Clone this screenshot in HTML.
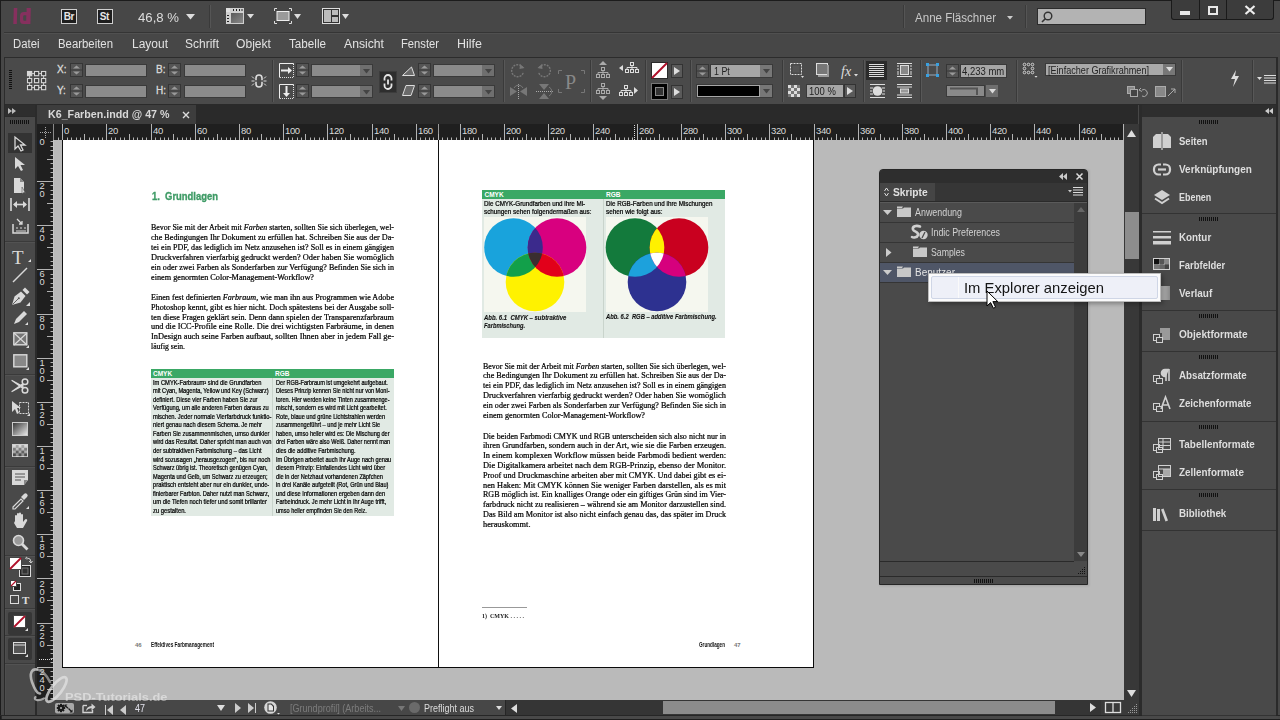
<!DOCTYPE html>
<html><head><meta charset="utf-8">
<style>
*{margin:0;padding:0;box-sizing:border-box}
html,body{width:1280px;height:720px;overflow:hidden;background:#474747;font-family:"Liberation Sans",sans-serif;position:relative}
.a{position:absolute}
.t{position:absolute;white-space:nowrap}
svg.a{overflow:visible}
</style></head><body>
<div class="a" style="left:0px;top:0px;width:1280px;height:1px;background:#1c1c1c;"></div>
<div class="a" style="left:0px;top:0px;width:1px;height:720px;background:#1c1c1c;"></div>
<div class="a" style="left:4px;top:32px;width:1276px;height:1px;background:#353535;"></div>
<div class="a" style="left:4px;top:33px;width:1276px;height:1px;background:#505050;"></div>
<div class="a" style="left:4px;top:57px;width:1276px;height:1px;background:#2c2c2c;"></div>
<div class="a" style="left:4px;top:58px;width:1px;height:46px;background:#2c2c2c;"></div>
<div class="a" style="left:5px;top:58px;width:1275px;height:46px;background:#4a4a4a;"></div>
<div class="a" style="left:0px;top:104px;width:1280px;height:1px;background:#2a2a2a;"></div>
<div class="a" style="left:37px;top:105px;width:1101px;height:19px;background:#2a2a2a;"></div>
<div class="a" style="left:37px;top:105px;width:159px;height:19px;background:#3d3d3d;"></div>
<div class="a" style="left:0px;top:104px;width:37px;height:616px;background:#2b2b2b;"></div>
<div class="a" style="left:0px;top:104px;width:1px;height:616px;background:#1c1c1c;"></div>
<div class="a" style="left:1px;top:104px;width:3px;height:611px;background:#474747;"></div>
<div class="a" style="left:4px;top:104px;width:1px;height:611px;background:#2a2a2a;"></div>
<div class="a" style="left:5px;top:105px;width:30px;height:11px;background:#2e2e2e;"></div>
<div class="a" style="left:5px;top:117px;width:30px;height:598px;background:#494949;"></div>
<div class="a" style="left:5px;top:117px;width:1px;height:598px;background:#4e4e4e;"></div>
<div class="a" style="left:37px;top:124px;width:1087px;height:16px;background:#1f1f1f;"></div>
<div class="a" style="left:37px;top:140px;width:16px;height:560px;background:#1f1f1f;"></div>
<div class="a" style="left:53px;top:124px;width:1px;height:16px;background:#8a8a8a;"></div>
<div class="a" style="left:438px;top:124px;width:1px;height:16px;background:#9a9a9a;"></div>
<div class="a" style="left:53px;top:140px;width:1071px;height:560px;background:#bababa;"></div>
<div class="a" style="left:53px;top:140px;width:1px;height:560px;background:#c6c6c6;"></div>
<div class="a" style="left:1124px;top:124px;width:15px;height:576px;background:#383838;"></div>
<div class="a" style="left:1125px;top:212px;width:14px;height:47px;background:#8d8d8d;"></div>
<div class="a" style="left:1139px;top:104px;width:141px;height:616px;background:#2b2b2b;"></div>
<div class="a" style="left:1142px;top:105px;width:134px;height:12px;background:#2e2e2e;"></div>
<div class="a" style="left:1276px;top:57px;width:2px;height:658px;background:#2a2a2a;"></div>
<div class="a" style="left:1278px;top:57px;width:2px;height:663px;background:#474747;"></div>
<div class="a" style="left:37px;top:700px;width:1102px;height:15px;background:#474747;"></div>
<div class="a" style="left:0px;top:715px;width:1280px;height:1px;background:#262626;"></div>
<div class="a" style="left:2px;top:716px;width:1276px;height:3px;background:#494949;"></div>
<div class="a" style="left:0px;top:719px;width:1280px;height:1px;background:#1e1e1e;"></div>
<div class="a" style="left:62px;top:140px;width:752px;height:528px;background:#ffffff;"></div>
<div class="a" style="left:62px;top:140px;width:1px;height:528px;background:#111;"></div>
<div class="a" style="left:813px;top:140px;width:1px;height:528px;background:#0a0a0a;"></div>
<div class="a" style="left:62px;top:667px;width:752px;height:1px;background:#0a0a0a;"></div>
<div class="a" style="left:438px;top:140px;width:1px;height:527px;background:#111;"></div>
<div class="t" id="f0" style="left:151.5px;top:190.83px;font-size:10.6px;line-height:10.6px;color:#3f9b66;font-weight:bold;font-family:'Liberation Sans',sans-serif;transform:scaleX(0.8898);transform-origin:0 0;-webkit-text-stroke:0.35px #3f9b66">1.&nbsp;&nbsp;Grundlagen</div>
<div class="t" id="f1" style="left:151px;top:224.33px;font-size:8.2px;line-height:8.2px;color:#000;font-weight:normal;font-family:'Liberation Serif',serif;transform:scaleX(0.9715);transform-origin:0 0;-webkit-text-stroke:0.22px #000">Bevor Sie mit der Arbeit mit <i>Farben</i> starten, sollten Sie sich überlegen, wel-</div>
<div class="t" id="f2" style="left:151px;top:234.28px;font-size:8.2px;line-height:8.2px;color:#000;font-weight:normal;font-family:'Liberation Serif',serif;transform:scaleX(0.9970);transform-origin:0 0;-webkit-text-stroke:0.22px #000">che Bedingungen Ihr Dokument zu erfüllen hat. Schreiben Sie aus der Da-</div>
<div class="t" id="f3" style="left:151px;top:244.23px;font-size:8.2px;line-height:8.2px;color:#000;font-weight:normal;font-family:'Liberation Serif',serif;transform:scaleX(0.9848);transform-origin:0 0;-webkit-text-stroke:0.22px #000">tei ein PDF, das lediglich im Netz anzusehen ist? Soll es in einem gängigen</div>
<div class="t" id="f4" style="left:151px;top:254.18px;font-size:8.2px;line-height:8.2px;color:#000;font-weight:normal;font-family:'Liberation Serif',serif;transform:scaleX(1.0209);transform-origin:0 0;-webkit-text-stroke:0.22px #000">Druckverfahren vierfarbig gedruckt werden? Oder haben Sie womöglich</div>
<div class="t" id="f5" style="left:151px;top:264.13px;font-size:8.2px;line-height:8.2px;color:#000;font-weight:normal;font-family:'Liberation Serif',serif;transform:scaleX(0.9838);transform-origin:0 0;-webkit-text-stroke:0.22px #000">ein oder zwei Farben als Sonderfarben zur Verfügung? Befinden Sie sich in</div>
<div class="t" id="f6" style="left:151px;top:274.08px;font-size:8.2px;line-height:8.2px;color:#000;font-weight:normal;font-family:'Liberation Serif',serif;transform:scaleX(1.0036);transform-origin:0 0;-webkit-text-stroke:0.22px #000">einem genormten Color-Management-Workflow?</div>
<div class="t" id="f7" style="left:151px;top:293.63px;font-size:8.2px;line-height:8.2px;color:#000;font-weight:normal;font-family:'Liberation Serif',serif;transform:scaleX(0.9903);transform-origin:0 0;-webkit-text-stroke:0.22px #000">Einen fest definierten <i>Farbraum</i>, wie man ihn aus Programmen wie Adobe</div>
<div class="t" id="f8" style="left:151px;top:303.58px;font-size:8.2px;line-height:8.2px;color:#000;font-weight:normal;font-family:'Liberation Serif',serif;transform:scaleX(1.0034);transform-origin:0 0;-webkit-text-stroke:0.22px #000">Photoshop kennt, gibt es hier nicht. Doch spätestens bei der Ausgabe soll-</div>
<div class="t" id="f9" style="left:151px;top:313.53px;font-size:8.2px;line-height:8.2px;color:#000;font-weight:normal;font-family:'Liberation Serif',serif;transform:scaleX(0.9988);transform-origin:0 0;-webkit-text-stroke:0.22px #000">ten diese Fragen geklärt sein. Denn dann spielen der Transparenzfarbraum</div>
<div class="t" id="f10" style="left:151px;top:323.48px;font-size:8.2px;line-height:8.2px;color:#000;font-weight:normal;font-family:'Liberation Serif',serif;transform:scaleX(1.0101);transform-origin:0 0;-webkit-text-stroke:0.22px #000">und die ICC-Profile eine Rolle. Die drei wichtigsten Farbräume, in denen</div>
<div class="t" id="f11" style="left:151px;top:333.43px;font-size:8.2px;line-height:8.2px;color:#000;font-weight:normal;font-family:'Liberation Serif',serif;transform:scaleX(1.0198);transform-origin:0 0;-webkit-text-stroke:0.22px #000">InDesign auch seine Farben aufbaut, sollten Ihnen aber in jedem Fall ge-</div>
<div class="t" id="f12" style="left:151px;top:343.38px;font-size:8.2px;line-height:8.2px;color:#000;font-weight:normal;font-family:'Liberation Serif',serif;transform:scaleX(0.9343);transform-origin:0 0;-webkit-text-stroke:0.22px #000">läufig sein.</div>
<div class="a" style="left:151px;top:369px;width:243px;height:9px;background:#3aa865;"></div>
<div class="a" style="left:151px;top:378px;width:243px;height:138px;background:#e1eae4;"></div>
<div class="a" style="left:272px;top:378px;width:1px;height:138px;background:#c9d4cc;"></div>
<div class="t" style="left:153px;top:371.00px;font-size:6.5px;line-height:6.5px;color:#fff;font-weight:bold;font-family:'Liberation Sans',sans-serif;letter-spacing:0px">CMYK</div>
<div class="t" style="left:275px;top:371.00px;font-size:6.5px;line-height:6.5px;color:#fff;font-weight:bold;font-family:'Liberation Sans',sans-serif;">RGB</div>
<div class="t" id="f13" style="left:152.5px;top:379.57px;font-size:6.3px;line-height:6.3px;color:#000;font-weight:normal;font-family:'Liberation Sans',sans-serif;transform:scaleX(0.9119);transform-origin:0 0;-webkit-text-stroke:0.22px #000">Im CMYK-Farbraum¹ sind die Grundfarben</div>
<div class="t" id="f14" style="left:152.5px;top:388.12px;font-size:6.3px;line-height:6.3px;color:#000;font-weight:normal;font-family:'Liberation Sans',sans-serif;transform:scaleX(0.8958);transform-origin:0 0;-webkit-text-stroke:0.22px #000">mit Cyan, Magenta, Yellow und Key (Schwarz)</div>
<div class="t" id="f15" style="left:152.5px;top:396.67px;font-size:6.3px;line-height:6.3px;color:#000;font-weight:normal;font-family:'Liberation Sans',sans-serif;transform:scaleX(0.8992);transform-origin:0 0;-webkit-text-stroke:0.22px #000">definiert. Diese vier Farben haben Sie zur</div>
<div class="t" id="f16" style="left:152.5px;top:405.22px;font-size:6.3px;line-height:6.3px;color:#000;font-weight:normal;font-family:'Liberation Sans',sans-serif;transform:scaleX(0.9005);transform-origin:0 0;-webkit-text-stroke:0.22px #000">Verfügung, um alle anderen Farben daraus zu</div>
<div class="t" id="f17" style="left:152.5px;top:413.77px;font-size:6.3px;line-height:6.3px;color:#000;font-weight:normal;font-family:'Liberation Sans',sans-serif;transform:scaleX(0.9208);transform-origin:0 0;-webkit-text-stroke:0.22px #000">mischen. Jeder normale Vierfarbdruck funktio-</div>
<div class="t" id="f18" style="left:152.5px;top:422.32px;font-size:6.3px;line-height:6.3px;color:#000;font-weight:normal;font-family:'Liberation Sans',sans-serif;transform:scaleX(0.9079);transform-origin:0 0;-webkit-text-stroke:0.22px #000">niert genau nach diesem Schema. Je mehr</div>
<div class="t" id="f19" style="left:152.5px;top:430.87px;font-size:6.3px;line-height:6.3px;color:#000;font-weight:normal;font-family:'Liberation Sans',sans-serif;transform:scaleX(0.9079);transform-origin:0 0;-webkit-text-stroke:0.22px #000">Farben Sie zusammenmischen, umso dunkler</div>
<div class="t" id="f20" style="left:152.5px;top:439.42px;font-size:6.3px;line-height:6.3px;color:#000;font-weight:normal;font-family:'Liberation Sans',sans-serif;transform:scaleX(0.9077);transform-origin:0 0;-webkit-text-stroke:0.22px #000">wird das Resultat. Daher spricht man auch von</div>
<div class="t" id="f21" style="left:152.5px;top:447.97px;font-size:6.3px;line-height:6.3px;color:#000;font-weight:normal;font-family:'Liberation Sans',sans-serif;transform:scaleX(0.9144);transform-origin:0 0;-webkit-text-stroke:0.22px #000">der subtraktiven Farbmischung – das Licht</div>
<div class="t" id="f22" style="left:152.5px;top:456.52px;font-size:6.3px;line-height:6.3px;color:#000;font-weight:normal;font-family:'Liberation Sans',sans-serif;transform:scaleX(0.8967);transform-origin:0 0;-webkit-text-stroke:0.22px #000">wird sozusagen „herausgezogen“, bis nur noch</div>
<div class="t" id="f23" style="left:152.5px;top:465.07px;font-size:6.3px;line-height:6.3px;color:#000;font-weight:normal;font-family:'Liberation Sans',sans-serif;transform:scaleX(0.8896);transform-origin:0 0;-webkit-text-stroke:0.22px #000">Schwarz übrig ist. Theoretisch genügen Cyan,</div>
<div class="t" id="f24" style="left:152.5px;top:473.62px;font-size:6.3px;line-height:6.3px;color:#000;font-weight:normal;font-family:'Liberation Sans',sans-serif;transform:scaleX(0.8938);transform-origin:0 0;-webkit-text-stroke:0.22px #000">Magenta und Gelb, um Schwarz zu erzeugen;</div>
<div class="t" id="f25" style="left:152.5px;top:482.17px;font-size:6.3px;line-height:6.3px;color:#000;font-weight:normal;font-family:'Liberation Sans',sans-serif;transform:scaleX(0.9203);transform-origin:0 0;-webkit-text-stroke:0.22px #000">praktisch entsteht aber nur ein dunkler, unde-</div>
<div class="t" id="f26" style="left:152.5px;top:490.72px;font-size:6.3px;line-height:6.3px;color:#000;font-weight:normal;font-family:'Liberation Sans',sans-serif;transform:scaleX(0.8981);transform-origin:0 0;-webkit-text-stroke:0.22px #000">finierbarer Farbton. Daher nutzt man Schwarz,</div>
<div class="t" id="f27" style="left:152.5px;top:499.27px;font-size:6.3px;line-height:6.3px;color:#000;font-weight:normal;font-family:'Liberation Sans',sans-serif;transform:scaleX(0.9201);transform-origin:0 0;-webkit-text-stroke:0.22px #000">um die Tiefen noch tiefer und somit brillanter</div>
<div class="t" id="f28" style="left:152.5px;top:507.82px;font-size:6.3px;line-height:6.3px;color:#000;font-weight:normal;font-family:'Liberation Sans',sans-serif;transform:scaleX(0.9239);transform-origin:0 0;-webkit-text-stroke:0.22px #000">zu gestalten.</div>
<div class="t" id="f29" style="left:275.5px;top:379.57px;font-size:6.3px;line-height:6.3px;color:#000;font-weight:normal;font-family:'Liberation Sans',sans-serif;transform:scaleX(0.8881);transform-origin:0 0;-webkit-text-stroke:0.22px #000">Der RGB-Farbraum ist umgekehrt aufgebaut.</div>
<div class="t" id="f30" style="left:275.5px;top:388.12px;font-size:6.3px;line-height:6.3px;color:#000;font-weight:normal;font-family:'Liberation Sans',sans-serif;transform:scaleX(0.8811);transform-origin:0 0;-webkit-text-stroke:0.22px #000">Dieses Prinzip kennen Sie nicht nur von Moni-</div>
<div class="t" id="f31" style="left:275.5px;top:396.67px;font-size:6.3px;line-height:6.3px;color:#000;font-weight:normal;font-family:'Liberation Sans',sans-serif;transform:scaleX(0.8788);transform-origin:0 0;-webkit-text-stroke:0.22px #000">toren. Hier werden keine Tinten zusammenge-</div>
<div class="t" id="f32" style="left:275.5px;top:405.22px;font-size:6.3px;line-height:6.3px;color:#000;font-weight:normal;font-family:'Liberation Sans',sans-serif;transform:scaleX(0.9020);transform-origin:0 0;-webkit-text-stroke:0.22px #000">mischt, sondern es wird mit Licht gearbeitet.</div>
<div class="t" id="f33" style="left:275.5px;top:413.77px;font-size:6.3px;line-height:6.3px;color:#000;font-weight:normal;font-family:'Liberation Sans',sans-serif;transform:scaleX(0.8930);transform-origin:0 0;-webkit-text-stroke:0.22px #000">Rote, blaue und grüne Lichtstrahlen werden</div>
<div class="t" id="f34" style="left:275.5px;top:422.32px;font-size:6.3px;line-height:6.3px;color:#000;font-weight:normal;font-family:'Liberation Sans',sans-serif;transform:scaleX(0.8931);transform-origin:0 0;-webkit-text-stroke:0.22px #000">zusammengeführt – und je mehr Licht Sie</div>
<div class="t" id="f35" style="left:275.5px;top:430.87px;font-size:6.3px;line-height:6.3px;color:#000;font-weight:normal;font-family:'Liberation Sans',sans-serif;transform:scaleX(0.8885);transform-origin:0 0;-webkit-text-stroke:0.22px #000">haben, umso heller wird es: Die Mischung der</div>
<div class="t" id="f36" style="left:275.5px;top:439.42px;font-size:6.3px;line-height:6.3px;color:#000;font-weight:normal;font-family:'Liberation Sans',sans-serif;transform:scaleX(0.8818);transform-origin:0 0;-webkit-text-stroke:0.22px #000">drei Farben wäre also Weiß. Daher nennt man</div>
<div class="t" id="f37" style="left:275.5px;top:447.97px;font-size:6.3px;line-height:6.3px;color:#000;font-weight:normal;font-family:'Liberation Sans',sans-serif;transform:scaleX(0.8988);transform-origin:0 0;-webkit-text-stroke:0.22px #000">dies die additive Farbmischung.</div>
<div class="t" id="f38" style="left:275.5px;top:456.52px;font-size:6.3px;line-height:6.3px;color:#000;font-weight:normal;font-family:'Liberation Sans',sans-serif;transform:scaleX(0.8942);transform-origin:0 0;-webkit-text-stroke:0.22px #000">Im Übrigen arbeitet auch Ihr Auge nach genau</div>
<div class="t" id="f39" style="left:275.5px;top:465.07px;font-size:6.3px;line-height:6.3px;color:#000;font-weight:normal;font-family:'Liberation Sans',sans-serif;transform:scaleX(0.8956);transform-origin:0 0;-webkit-text-stroke:0.22px #000">diesem Prinzip: Einfallendes Licht wird über</div>
<div class="t" id="f40" style="left:275.5px;top:473.62px;font-size:6.3px;line-height:6.3px;color:#000;font-weight:normal;font-family:'Liberation Sans',sans-serif;transform:scaleX(0.8955);transform-origin:0 0;-webkit-text-stroke:0.22px #000">die in der Netzhaut vorhandenen Zäpfchen</div>
<div class="t" id="f41" style="left:275.5px;top:482.17px;font-size:6.3px;line-height:6.3px;color:#000;font-weight:normal;font-family:'Liberation Sans',sans-serif;transform:scaleX(0.8944);transform-origin:0 0;-webkit-text-stroke:0.22px #000">in drei Kanäle aufgeteilt (Rot, Grün und Blau)</div>
<div class="t" id="f42" style="left:275.5px;top:490.72px;font-size:6.3px;line-height:6.3px;color:#000;font-weight:normal;font-family:'Liberation Sans',sans-serif;transform:scaleX(0.9059);transform-origin:0 0;-webkit-text-stroke:0.22px #000">und diese Informationen ergeben dann den</div>
<div class="t" id="f43" style="left:275.5px;top:499.27px;font-size:6.3px;line-height:6.3px;color:#000;font-weight:normal;font-family:'Liberation Sans',sans-serif;transform:scaleX(0.8903);transform-origin:0 0;-webkit-text-stroke:0.22px #000">Farbeindruck. Je mehr Licht in Ihr Auge trifft,</div>
<div class="t" id="f44" style="left:275.5px;top:507.82px;font-size:6.3px;line-height:6.3px;color:#000;font-weight:normal;font-family:'Liberation Sans',sans-serif;transform:scaleX(0.8824);transform-origin:0 0;-webkit-text-stroke:0.22px #000">umso heller empfinden Sie den Reiz.</div>
<div class="t" style="left:135px;top:642.42px;font-size:6px;line-height:6px;color:#777;font-weight:bold;font-family:'Liberation Sans',sans-serif;">46</div>
<div class="t" id="f45" style="left:151px;top:642.17px;font-size:6.3px;line-height:6.3px;color:#111;font-weight:bold;font-family:'Liberation Sans',sans-serif;transform:scaleX(0.7500);transform-origin:0 0;">Effektives Farbmanagement</div>
<div class="a" style="left:482px;top:190px;width:243px;height:9px;background:#3aa865;"></div>
<div class="a" style="left:482px;top:199px;width:243px;height:139px;background:#e1eae4;"></div>
<div class="a" style="left:603px;top:199px;width:1px;height:139px;background:#c9d4cc;"></div>
<div class="t" style="left:484.5px;top:192.00px;font-size:6.5px;line-height:6.5px;color:#fff;font-weight:bold;font-family:'Liberation Sans',sans-serif;">CMYK</div>
<div class="t" style="left:606px;top:192.00px;font-size:6.5px;line-height:6.5px;color:#fff;font-weight:bold;font-family:'Liberation Sans',sans-serif;">RGB</div>
<div class="t" id="f46" style="left:484.4px;top:201.41px;font-size:6.6px;line-height:6.6px;color:#000;font-weight:normal;font-family:'Liberation Sans',sans-serif;transform:scaleX(0.9490);transform-origin:0 0;-webkit-text-stroke:0.22px #000">Die CMYK-Grundfarben und ihre Mi-</div>
<div class="t" id="f47" style="left:484.4px;top:209.21px;font-size:6.6px;line-height:6.6px;color:#000;font-weight:normal;font-family:'Liberation Sans',sans-serif;transform:scaleX(0.9552);transform-origin:0 0;-webkit-text-stroke:0.22px #000">schungen sehen folgendermaßen aus:</div>
<div class="t" id="f48" style="left:606px;top:201.41px;font-size:6.6px;line-height:6.6px;color:#000;font-weight:normal;font-family:'Liberation Sans',sans-serif;transform:scaleX(0.9496);transform-origin:0 0;-webkit-text-stroke:0.22px #000">Die RGB-Farben und ihre Mischungen</div>
<div class="t" id="f49" style="left:606px;top:209.21px;font-size:6.6px;line-height:6.6px;color:#000;font-weight:normal;font-family:'Liberation Sans',sans-serif;transform:scaleX(0.9692);transform-origin:0 0;-webkit-text-stroke:0.22px #000">sehen wie folgt aus:</div>
<div class="a" style="left:484px;top:217px;width:102px;height:95px;background:#f5f7ef;"></div>
<div class="a" style="left:606px;top:217px;width:102px;height:95px;background:#f5f7ef;"></div>
<svg class="a" style="left:484px;top:217px;" width="102" height="96" viewBox="0 0 102 96"><defs>
<clipPath id="cC"><circle cx="29.5" cy="30.5" r="29.3"/></clipPath>
<clipPath id="cM"><circle cx="73" cy="30.5" r="29.3"/></clipPath>
<clipPath id="cY"><circle cx="51" cy="65" r="29.3"/></clipPath>
</defs>
<circle cx="29.5" cy="30.5" r="29.3" fill="#19a3dc"/>
<circle cx="73" cy="30.5" r="29.3" fill="#d8007f"/>
<circle cx="51" cy="65" r="29.3" fill="#fff200"/>
<g clip-path="url(#cC)"><circle cx="73" cy="30.5" r="29.3" fill="#3b2a8c"/><circle cx="51" cy="65" r="29.3" fill="#12a04a"/></g>
<g clip-path="url(#cM)"><circle cx="51" cy="65" r="29.3" fill="#e2001a"/></g>
<g clip-path="url(#cC)"><g clip-path="url(#cM)"><circle cx="51" cy="65" r="29.3" fill="#3a2e30"/></g></g></svg>
<svg class="a" style="left:606px;top:217px;" width="102" height="96" viewBox="0 0 102 96"><defs>
<clipPath id="rG"><circle cx="29" cy="30.5" r="29.3"/></clipPath>
<clipPath id="rR"><circle cx="73" cy="30.5" r="29.3"/></clipPath>
<clipPath id="rB"><circle cx="51" cy="65" r="29.3"/></clipPath>
</defs>
<circle cx="29" cy="30.5" r="29.3" fill="#137a3c"/>
<circle cx="73" cy="30.5" r="29.3" fill="#c9001f"/>
<circle cx="51" cy="65" r="29.3" fill="#2d3190"/>
<g clip-path="url(#rG)"><circle cx="73" cy="30.5" r="29.3" fill="#fff100"/><circle cx="51" cy="65" r="29.3" fill="#1da1dc"/></g>
<g clip-path="url(#rR)"><circle cx="51" cy="65" r="29.3" fill="#d6007d"/></g>
<g clip-path="url(#rG)"><g clip-path="url(#rR)"><circle cx="51" cy="65" r="29.3" fill="#ffffff"/></g></g></svg>
<div class="t" id="f50" style="left:484.4px;top:314.54px;font-size:6.8px;line-height:6.8px;color:#111;font-weight:bold;font-family:'Liberation Sans',sans-serif;transform:scaleX(0.8750);transform-origin:0 0;font-style:italic;-webkit-text-stroke:0.1px #111">Abb. 6.1&nbsp; CMYK – subtraktive</div>
<div class="t" id="f51" style="left:484.4px;top:322.54px;font-size:6.8px;line-height:6.8px;color:#111;font-weight:bold;font-family:'Liberation Sans',sans-serif;transform:scaleX(0.8416);transform-origin:0 0;font-style:italic;-webkit-text-stroke:0.1px #111">Farbmischung.</div>
<div class="t" id="f52" style="left:606px;top:314.24px;font-size:6.8px;line-height:6.8px;color:#111;font-weight:bold;font-family:'Liberation Sans',sans-serif;transform:scaleX(0.8570);transform-origin:0 0;font-style:italic;-webkit-text-stroke:0.1px #111">Abb. 6.2&nbsp; RGB – additive Farbmischung.</div>
<div class="t" id="f53" style="left:482.5px;top:362.53px;font-size:8.2px;line-height:8.2px;color:#000;font-weight:normal;font-family:'Liberation Serif',serif;transform:scaleX(0.9715);transform-origin:0 0;-webkit-text-stroke:0.22px #000">Bevor Sie mit der Arbeit mit <i>Farben</i> starten, sollten Sie sich überlegen, wel-</div>
<div class="t" id="f54" style="left:482.5px;top:372.49px;font-size:8.2px;line-height:8.2px;color:#000;font-weight:normal;font-family:'Liberation Serif',serif;transform:scaleX(0.9970);transform-origin:0 0;-webkit-text-stroke:0.22px #000">che Bedingungen Ihr Dokument zu erfüllen hat. Schreiben Sie aus der Da-</div>
<div class="t" id="f55" style="left:482.5px;top:382.45px;font-size:8.2px;line-height:8.2px;color:#000;font-weight:normal;font-family:'Liberation Serif',serif;transform:scaleX(0.9848);transform-origin:0 0;-webkit-text-stroke:0.22px #000">tei ein PDF, das lediglich im Netz anzusehen ist? Soll es in einem gängigen</div>
<div class="t" id="f56" style="left:482.5px;top:392.41px;font-size:8.2px;line-height:8.2px;color:#000;font-weight:normal;font-family:'Liberation Serif',serif;transform:scaleX(1.0209);transform-origin:0 0;-webkit-text-stroke:0.22px #000">Druckverfahren vierfarbig gedruckt werden? Oder haben Sie womöglich</div>
<div class="t" id="f57" style="left:482.5px;top:402.37px;font-size:8.2px;line-height:8.2px;color:#000;font-weight:normal;font-family:'Liberation Serif',serif;transform:scaleX(0.9838);transform-origin:0 0;-webkit-text-stroke:0.22px #000">ein oder zwei Farben als Sonderfarben zur Verfügung? Befinden Sie sich in</div>
<div class="t" id="f58" style="left:482.5px;top:412.33px;font-size:8.2px;line-height:8.2px;color:#000;font-weight:normal;font-family:'Liberation Serif',serif;transform:scaleX(0.9974);transform-origin:0 0;-webkit-text-stroke:0.22px #000">einem genormten Color-Management-Workflow?</div>
<div class="t" id="f59" style="left:482.5px;top:432.53px;font-size:8.2px;line-height:8.2px;color:#000;font-weight:normal;font-family:'Liberation Serif',serif;transform:scaleX(0.9831);transform-origin:0 0;-webkit-text-stroke:0.22px #000">Die beiden Farbmodi CMYK und RGB unterscheiden sich also nicht nur in</div>
<div class="t" id="f60" style="left:482.5px;top:442.35px;font-size:8.2px;line-height:8.2px;color:#000;font-weight:normal;font-family:'Liberation Serif',serif;transform:scaleX(1.0160);transform-origin:0 0;-webkit-text-stroke:0.22px #000">ihren Grundfarben, sondern auch in der Art, wie sie die Farben erzeugen.</div>
<div class="t" id="f61" style="left:482.5px;top:452.17px;font-size:8.2px;line-height:8.2px;color:#000;font-weight:normal;font-family:'Liberation Serif',serif;transform:scaleX(1.0252);transform-origin:0 0;-webkit-text-stroke:0.22px #000">In einem komplexen Workflow müssen beide Farbmodi bedient werden:</div>
<div class="t" id="f62" style="left:482.5px;top:461.99px;font-size:8.2px;line-height:8.2px;color:#000;font-weight:normal;font-family:'Liberation Serif',serif;transform:scaleX(1.0296);transform-origin:0 0;-webkit-text-stroke:0.22px #000">Die Digitalkamera arbeitet nach dem RGB-Prinzip, ebenso der Monitor.</div>
<div class="t" id="f63" style="left:482.5px;top:471.81px;font-size:8.2px;line-height:8.2px;color:#000;font-weight:normal;font-family:'Liberation Serif',serif;transform:scaleX(1.0025);transform-origin:0 0;-webkit-text-stroke:0.22px #000">Proof und Druckmaschine arbeiten aber mit CMYK. Und dabei gibt es ei-</div>
<div class="t" id="f64" style="left:482.5px;top:481.63px;font-size:8.2px;line-height:8.2px;color:#000;font-weight:normal;font-family:'Liberation Serif',serif;transform:scaleX(1.0177);transform-origin:0 0;-webkit-text-stroke:0.22px #000">nen Haken: Mit CMYK können Sie weniger Farben darstellen, als es mit</div>
<div class="t" id="f65" style="left:482.5px;top:491.45px;font-size:8.2px;line-height:8.2px;color:#000;font-weight:normal;font-family:'Liberation Serif',serif;transform:scaleX(0.9808);transform-origin:0 0;-webkit-text-stroke:0.22px #000">RGB möglich ist. Ein knalliges Orange oder ein giftiges Grün sind im Vier-</div>
<div class="t" id="f66" style="left:482.5px;top:501.27px;font-size:8.2px;line-height:8.2px;color:#000;font-weight:normal;font-family:'Liberation Serif',serif;transform:scaleX(0.9961);transform-origin:0 0;-webkit-text-stroke:0.22px #000">farbdruck nicht zu realisieren – während sie am Monitor darzustellen sind.</div>
<div class="t" id="f67" style="left:482.5px;top:511.09px;font-size:8.2px;line-height:8.2px;color:#000;font-weight:normal;font-family:'Liberation Serif',serif;transform:scaleX(0.9969);transform-origin:0 0;-webkit-text-stroke:0.22px #000">Das Bild am Monitor ist also nicht einfach genau das, das später im Druck</div>
<div class="t" id="f68" style="left:482.5px;top:520.91px;font-size:8.2px;line-height:8.2px;color:#000;font-weight:normal;font-family:'Liberation Serif',serif;transform:scaleX(1.0188);transform-origin:0 0;-webkit-text-stroke:0.22px #000">herauskommt.</div>
<div class="a" style="left:482px;top:607px;width:45px;height:1px;background:#999;"></div>
<div class="t" id="f69" style="left:482px;top:612.56px;font-size:6.5px;line-height:6.5px;color:#222;font-weight:bold;font-family:'Liberation Serif',serif;transform:scaleX(0.9231);transform-origin:0 0;">1)&nbsp; CMYK . . . . .</div>
<div class="t" id="f70" style="left:699px;top:642.17px;font-size:6.3px;line-height:6.3px;color:#111;font-weight:bold;font-family:'Liberation Sans',sans-serif;transform:scaleX(0.7356);transform-origin:0 0;">Grundlagen</div>
<div class="t" style="left:734px;top:642.42px;font-size:6px;line-height:6px;color:#777;font-weight:bold;font-family:'Liberation Sans',sans-serif;">47</div>
<svg class="a" style="left:13px;top:7px;" width="19" height="17" viewBox="0 0 19 17"><path d="M0.8 1H4.3L3.8 17H0.3Z" fill="#86305e"/><path d="M13.6 1H17.8L17.4 17H10.5Q7 17 7 13.5V9Q7 5 10.8 5H13.6Z M13.3 8.2H11.3Q10.2 8.2 10.2 9.6V12.4Q10.2 13.8 11.3 13.8H13.2Z" fill="#86305e" fill-rule="evenodd"/></svg>
<div class="a" style="left:61px;top:9px;width:16px;height:15px;background:#1e1e1e;border:1px solid #cfcfcf"></div>
<div class="t" style="left:63.8px;top:11.84px;font-size:10px;line-height:10px;color:#e6e6e6;font-weight:bold;font-family:'Liberation Sans',sans-serif;letter-spacing:-0.4px">Br</div>
<div class="a" style="left:97px;top:9px;width:16px;height:15px;background:#1e1e1e;border:1px solid #cfcfcf"></div>
<div class="t" style="left:99.8px;top:11.84px;font-size:10px;line-height:10px;color:#e6e6e6;font-weight:bold;font-family:'Liberation Sans',sans-serif;letter-spacing:-0.4px">St</div>
<div class="t" id="f71" style="left:137.5px;top:11.00px;font-size:13px;line-height:13px;color:#dcdcdc;font-weight:normal;font-family:'Liberation Sans',sans-serif;transform:scaleX(1.0127);transform-origin:0 0;">46,8 %</div>
<svg class="a" style="left:186px;top:14px;" width="10" height="6" viewBox="0 0 10 6"><path d="M0 0H9L4.5 5.5Z" fill="#ddd"/></svg>
<div class="a" style="left:209px;top:5px;width:1px;height:23px;background:#3a3a3a;"></div>
<div class="a" style="left:210px;top:5px;width:1px;height:23px;background:#555;"></div>
<svg class="a" style="left:226px;top:8px;" width="28" height="17" viewBox="0 0 28 17"><defs><linearGradient id="vo" x1="0" x2="1" y1="0" y2="1"><stop offset="0" stop-color="#5a5a5a"/><stop offset="1" stop-color="#8a8a8a"/></linearGradient></defs><rect x="0" y="0" width="18" height="16" fill="#cfcfcf"/><rect x="5" y="5" width="12" height="10" fill="url(#vo)"/><path d="M7.5 1V3M10.5 1V3M13.5 1V3M16 1V3M1 7.5H3M1 10.5H3M1 13.5H3" stroke="#222"/><rect x="0" y="0" width="4" height="4" fill="#e0e0e0"/><path d="M21 6H28L24.5 10.5Z" fill="#ddd"/></svg>
<svg class="a" style="left:274px;top:8px;" width="28" height="17" viewBox="0 0 28 17"><rect x="3" y="3.5" width="12" height="9" fill="#9a9a9a" stroke="#eee"/><path d="M0.5 3V0.5H3M15 0.5H17.5V3M17.5 13V15.5H15M3 15.5H0.5V13" stroke="#ddd" fill="none"/><path d="M20 6H27L23.5 11Z" fill="#ddd"/></svg>
<svg class="a" style="left:322px;top:8px;" width="28" height="17" viewBox="0 0 28 17"><rect x="0.5" y="0.5" width="17" height="15" fill="#333" stroke="#ddd"/><rect x="2" y="2" width="7" height="12" fill="#bbb"/><rect x="10" y="2" width="6" height="5" fill="#bbb"/><rect x="10" y="9" width="6" height="5" fill="#bbb"/><path d="M20 6H27L23.5 11Z" fill="#ddd"/></svg>
<div class="a" style="left:903px;top:5px;width:1px;height:23px;background:#3a3a3a;"></div>
<div class="a" style="left:904px;top:5px;width:1px;height:23px;background:#555;"></div>
<div class="t" id="f72" style="left:915px;top:11.00px;font-size:13px;line-height:13px;color:#c8c8c8;font-weight:normal;font-family:'Liberation Sans',sans-serif;transform:scaleX(0.8895);transform-origin:0 0;">Anne Fläschner</div>
<svg class="a" style="left:1007px;top:16px;" width="6" height="4" viewBox="0 0 6 4"><path d="M0 0H6L3 3.5Z" fill="#ccc"/></svg>
<div class="a" style="left:1025px;top:5px;width:1px;height:23px;background:#3a3a3a;"></div>
<div class="a" style="left:1026px;top:5px;width:1px;height:23px;background:#555;"></div>
<div class="a" style="left:1037px;top:8px;width:109px;height:17px;background:#b3b3b3;border:1px solid #2c2c2c"></div>
<svg class="a" style="left:1041px;top:11px;" width="12" height="12" viewBox="0 0 12 12"><circle cx="7" cy="5" r="3.8" fill="none" stroke="#333" stroke-width="1.4"/><path d="M4.3 7.7L1 11" stroke="#333" stroke-width="1.6"/></svg>
<div class="a" style="left:1171px;top:0px;width:103px;height:20px;background:#3c3c3c;border:1px solid #1a1a1a;border-top:none;border-radius:0 0 3px 3px"></div>
<div class="a" style="left:1199px;top:0px;width:1px;height:20px;background:#1a1a1a;"></div>
<div class="a" style="left:1226px;top:0px;width:1px;height:20px;background:#1a1a1a;"></div>
<div class="a" style="left:1180px;top:11px;width:10px;height:4px;background:#e8e8e8;"></div>
<div class="a" style="left:1208px;top:6px;width:10px;height:9px;border:2px solid #e8e8e8"></div>
<svg class="a" style="left:1244px;top:5px;" width="12" height="10" viewBox="0 0 12 10"><path d="M1.5 1L10.5 9M10.5 1L1.5 9" stroke="#eee" stroke-width="2.2"/></svg>
<div class="t" id="f73" style="left:12.5px;top:38.02px;font-size:12.5px;line-height:12.5px;color:#e2e2e2;font-weight:normal;font-family:'Liberation Sans',sans-serif;transform:scaleX(0.9079);transform-origin:0 0;">Datei</div>
<div class="t" id="f74" style="left:57.5px;top:38.02px;font-size:12.5px;line-height:12.5px;color:#e2e2e2;font-weight:normal;font-family:'Liberation Sans',sans-serif;transform:scaleX(0.9096);transform-origin:0 0;">Bearbeiten</div>
<div class="t" id="f75" style="left:132px;top:38.02px;font-size:12.5px;line-height:12.5px;color:#e2e2e2;font-weight:normal;font-family:'Liberation Sans',sans-serif;transform:scaleX(0.9592);transform-origin:0 0;">Layout</div>
<div class="t" id="f76" style="left:185px;top:38.02px;font-size:12.5px;line-height:12.5px;color:#e2e2e2;font-weight:normal;font-family:'Liberation Sans',sans-serif;transform:scaleX(0.9594);transform-origin:0 0;">Schrift</div>
<div class="t" id="f77" style="left:236px;top:38.02px;font-size:12.5px;line-height:12.5px;color:#e2e2e2;font-weight:normal;font-family:'Liberation Sans',sans-serif;transform:scaleX(0.9684);transform-origin:0 0;">Objekt</div>
<div class="t" id="f78" style="left:289px;top:38.02px;font-size:12.5px;line-height:12.5px;color:#e2e2e2;font-weight:normal;font-family:'Liberation Sans',sans-serif;transform:scaleX(0.9338);transform-origin:0 0;">Tabelle</div>
<div class="t" id="f79" style="left:344px;top:38.02px;font-size:12.5px;line-height:12.5px;color:#e2e2e2;font-weight:normal;font-family:'Liberation Sans',sans-serif;transform:scaleX(0.9756);transform-origin:0 0;">Ansicht</div>
<div class="t" id="f80" style="left:401px;top:38.02px;font-size:12.5px;line-height:12.5px;color:#e2e2e2;font-weight:normal;font-family:'Liberation Sans',sans-serif;transform:scaleX(0.8964);transform-origin:0 0;">Fenster</div>
<div class="t" id="f81" style="left:457px;top:38.02px;font-size:12.5px;line-height:12.5px;color:#e2e2e2;font-weight:normal;font-family:'Liberation Sans',sans-serif;transform:scaleX(0.9994);transform-origin:0 0;">Hilfe</div>
<div class="t" id="f82" style="left:47.5px;top:109.27px;font-size:11.5px;line-height:11.5px;color:#d8d8d8;font-weight:bold;font-family:'Liberation Sans',sans-serif;transform:scaleX(0.9295);transform-origin:0 0;">K6_Farben.indd @ 47 %</div>
<svg class="a" style="left:182px;top:111px;" width="8" height="8" viewBox="0 0 8 8"><path d="M1 1L7 7M7 1L1 7" stroke="#ddd" stroke-width="1.4"/></svg>
<svg class="a" style="left:8px;top:107.5px;" width="8" height="6" viewBox="0 0 8 6"><path d="M0 0L4 3L0 6ZM4 0L8 3L4 6Z" fill="#bbb"/></svg>
<svg class="a" style="left:1265px;top:107.5px;" width="8" height="6" viewBox="0 0 8 6"><path d="M4 0L0 3L4 6ZM8 0L4 3L8 6Z" fill="#ccc"/></svg>
<svg class="a" style="left:54px;top:124px;" width="1070" height="16" viewBox="0 0 1070 16"><path d="M4.5 13.5V16M8.5 0V16M13.5 13.5V16M17.5 13.5V16M22.5 13.5V16M26.5 13.5V16M30.5 10V16M35.5 13.5V16M39.5 13.5V16M44.5 13.5V16M48.5 13.5V16M52.5 0V16M57.5 13.5V16M61.5 13.5V16M66.5 13.5V16M70.5 13.5V16M75.5 10V16M79.5 13.5V16M83.5 13.5V16M88.5 13.5V16M92.5 13.5V16M97.5 0V16M101.5 13.5V16M106.5 13.5V16M110.5 13.5V16M114.5 13.5V16M119.5 10V16M123.5 13.5V16M128.5 13.5V16M132.5 13.5V16M136.5 13.5V16M141.5 0V16M145.5 13.5V16M150.5 13.5V16M154.5 13.5V16M159.5 13.5V16M163.5 10V16M167.5 13.5V16M172.5 13.5V16M176.5 13.5V16M181.5 13.5V16M185.5 0V16M189.5 13.5V16M194.5 13.5V16M198.5 13.5V16M203.5 13.5V16M207.5 10V16M212.5 13.5V16M216.5 13.5V16M220.5 13.5V16M225.5 13.5V16M229.5 0V16M234.5 13.5V16M238.5 13.5V16M243.5 13.5V16M247.5 13.5V16M251.5 10V16M256.5 13.5V16M260.5 13.5V16M265.5 13.5V16M269.5 13.5V16M273.5 0V16M278.5 13.5V16M282.5 13.5V16M287.5 13.5V16M291.5 13.5V16M296.5 10V16M300.5 13.5V16M304.5 13.5V16M309.5 13.5V16M313.5 13.5V16M318.5 0V16M322.5 13.5V16M326.5 13.5V16M331.5 13.5V16M335.5 13.5V16M340.5 10V16M344.5 13.5V16M349.5 13.5V16M353.5 13.5V16M357.5 13.5V16M362.5 0V16M366.5 13.5V16M371.5 13.5V16M375.5 13.5V16M379.5 13.5V16M384.5 10V16M388.5 13.5V16M393.5 13.5V16M397.5 13.5V16M402.5 13.5V16M406.5 0V16M410.5 13.5V16M415.5 13.5V16M419.5 13.5V16M424.5 13.5V16M428.5 10V16M433.5 13.5V16M437.5 13.5V16M441.5 13.5V16M446.5 13.5V16M450.5 0V16M455.5 13.5V16M459.5 13.5V16M463.5 13.5V16M468.5 13.5V16M472.5 10V16M477.5 13.5V16M481.5 13.5V16M486.5 13.5V16M490.5 13.5V16M494.5 0V16M499.5 13.5V16M503.5 13.5V16M508.5 13.5V16M512.5 13.5V16M516.5 10V16M521.5 13.5V16M525.5 13.5V16M530.5 13.5V16M534.5 13.5V16M539.5 0V16M543.5 13.5V16M547.5 13.5V16M552.5 13.5V16M556.5 13.5V16M561.5 10V16M565.5 13.5V16M570.5 13.5V16M574.5 13.5V16M578.5 13.5V16M583.5 0V16M587.5 13.5V16M592.5 13.5V16M596.5 13.5V16M600.5 13.5V16M605.5 10V16M609.5 13.5V16M614.5 13.5V16M618.5 13.5V16M623.5 13.5V16M627.5 0V16M631.5 13.5V16M636.5 13.5V16M640.5 13.5V16M645.5 13.5V16M649.5 10V16M653.5 13.5V16M658.5 13.5V16M662.5 13.5V16M667.5 13.5V16M671.5 0V16M676.5 13.5V16M680.5 13.5V16M684.5 13.5V16M689.5 13.5V16M693.5 10V16M698.5 13.5V16M702.5 13.5V16M707.5 13.5V16M711.5 13.5V16M715.5 0V16M720.5 13.5V16M724.5 13.5V16M729.5 13.5V16M733.5 13.5V16M737.5 10V16M742.5 13.5V16M746.5 13.5V16M751.5 13.5V16M755.5 13.5V16M760.5 0V16M764.5 13.5V16M768.5 13.5V16M773.5 13.5V16M777.5 13.5V16M782.5 10V16M786.5 13.5V16M790.5 13.5V16M795.5 13.5V16M799.5 13.5V16M804.5 0V16M808.5 13.5V16M813.5 13.5V16M817.5 13.5V16M821.5 13.5V16M826.5 10V16M830.5 13.5V16M835.5 13.5V16M839.5 13.5V16M843.5 13.5V16M848.5 0V16M852.5 13.5V16M857.5 13.5V16M861.5 13.5V16M866.5 13.5V16M870.5 10V16M874.5 13.5V16M879.5 13.5V16M883.5 13.5V16M888.5 13.5V16M892.5 0V16M897.5 13.5V16M901.5 13.5V16M905.5 13.5V16M910.5 13.5V16M914.5 10V16M919.5 13.5V16M923.5 13.5V16M927.5 13.5V16M932.5 13.5V16M936.5 0V16M941.5 13.5V16M945.5 13.5V16M950.5 13.5V16M954.5 13.5V16M958.5 10V16M963.5 13.5V16M967.5 13.5V16M972.5 13.5V16M976.5 13.5V16M980.5 0V16M985.5 13.5V16M989.5 13.5V16M994.5 13.5V16M998.5 13.5V16M1003.5 10V16M1007.5 13.5V16M1011.5 13.5V16M1016.5 13.5V16M1020.5 13.5V16M1025.5 0V16M1029.5 13.5V16M1034.5 13.5V16M1038.5 13.5V16M1042.5 13.5V16M1047.5 10V16M1051.5 13.5V16M1056.5 13.5V16M1060.5 13.5V16M1064.5 13.5V16M1069.5 0V16" stroke="#b4b4b4" stroke-width="1"/></svg>
<div class="t" style="left:64px;top:125.96px;font-size:9.5px;line-height:9.5px;color:#dadada;font-weight:normal;font-family:'Liberation Sans',sans-serif;letter-spacing:-0.4px">0</div>
<div class="t" style="left:108px;top:125.96px;font-size:9.5px;line-height:9.5px;color:#dadada;font-weight:normal;font-family:'Liberation Sans',sans-serif;letter-spacing:-0.4px">20</div>
<div class="t" style="left:153px;top:125.96px;font-size:9.5px;line-height:9.5px;color:#dadada;font-weight:normal;font-family:'Liberation Sans',sans-serif;letter-spacing:-0.4px">40</div>
<div class="t" style="left:197px;top:125.96px;font-size:9.5px;line-height:9.5px;color:#dadada;font-weight:normal;font-family:'Liberation Sans',sans-serif;letter-spacing:-0.4px">60</div>
<div class="t" style="left:241px;top:125.96px;font-size:9.5px;line-height:9.5px;color:#dadada;font-weight:normal;font-family:'Liberation Sans',sans-serif;letter-spacing:-0.4px">80</div>
<div class="t" style="left:285px;top:125.96px;font-size:9.5px;line-height:9.5px;color:#dadada;font-weight:normal;font-family:'Liberation Sans',sans-serif;letter-spacing:-0.4px">100</div>
<div class="t" style="left:329px;top:125.96px;font-size:9.5px;line-height:9.5px;color:#dadada;font-weight:normal;font-family:'Liberation Sans',sans-serif;letter-spacing:-0.4px">120</div>
<div class="t" style="left:374px;top:125.96px;font-size:9.5px;line-height:9.5px;color:#dadada;font-weight:normal;font-family:'Liberation Sans',sans-serif;letter-spacing:-0.4px">140</div>
<div class="t" style="left:418px;top:125.96px;font-size:9.5px;line-height:9.5px;color:#dadada;font-weight:normal;font-family:'Liberation Sans',sans-serif;letter-spacing:-0.4px">160</div>
<div class="t" style="left:462px;top:125.96px;font-size:9.5px;line-height:9.5px;color:#dadada;font-weight:normal;font-family:'Liberation Sans',sans-serif;letter-spacing:-0.4px">180</div>
<div class="t" style="left:506px;top:125.96px;font-size:9.5px;line-height:9.5px;color:#dadada;font-weight:normal;font-family:'Liberation Sans',sans-serif;letter-spacing:-0.4px">200</div>
<div class="t" style="left:550px;top:125.96px;font-size:9.5px;line-height:9.5px;color:#dadada;font-weight:normal;font-family:'Liberation Sans',sans-serif;letter-spacing:-0.4px">220</div>
<div class="t" style="left:595px;top:125.96px;font-size:9.5px;line-height:9.5px;color:#dadada;font-weight:normal;font-family:'Liberation Sans',sans-serif;letter-spacing:-0.4px">240</div>
<div class="t" style="left:639px;top:125.96px;font-size:9.5px;line-height:9.5px;color:#dadada;font-weight:normal;font-family:'Liberation Sans',sans-serif;letter-spacing:-0.4px">260</div>
<div class="t" style="left:683px;top:125.96px;font-size:9.5px;line-height:9.5px;color:#dadada;font-weight:normal;font-family:'Liberation Sans',sans-serif;letter-spacing:-0.4px">280</div>
<div class="t" style="left:727px;top:125.96px;font-size:9.5px;line-height:9.5px;color:#dadada;font-weight:normal;font-family:'Liberation Sans',sans-serif;letter-spacing:-0.4px">300</div>
<div class="t" style="left:771px;top:125.96px;font-size:9.5px;line-height:9.5px;color:#dadada;font-weight:normal;font-family:'Liberation Sans',sans-serif;letter-spacing:-0.4px">320</div>
<div class="t" style="left:816px;top:125.96px;font-size:9.5px;line-height:9.5px;color:#dadada;font-weight:normal;font-family:'Liberation Sans',sans-serif;letter-spacing:-0.4px">340</div>
<div class="t" style="left:860px;top:125.96px;font-size:9.5px;line-height:9.5px;color:#dadada;font-weight:normal;font-family:'Liberation Sans',sans-serif;letter-spacing:-0.4px">360</div>
<div class="t" style="left:904px;top:125.96px;font-size:9.5px;line-height:9.5px;color:#dadada;font-weight:normal;font-family:'Liberation Sans',sans-serif;letter-spacing:-0.4px">380</div>
<div class="t" style="left:948px;top:125.96px;font-size:9.5px;line-height:9.5px;color:#dadada;font-weight:normal;font-family:'Liberation Sans',sans-serif;letter-spacing:-0.4px">400</div>
<div class="t" style="left:992px;top:125.96px;font-size:9.5px;line-height:9.5px;color:#dadada;font-weight:normal;font-family:'Liberation Sans',sans-serif;letter-spacing:-0.4px">420</div>
<div class="t" style="left:1036px;top:125.96px;font-size:9.5px;line-height:9.5px;color:#dadada;font-weight:normal;font-family:'Liberation Sans',sans-serif;letter-spacing:-0.4px">440</div>
<div class="t" style="left:1081px;top:125.96px;font-size:9.5px;line-height:9.5px;color:#dadada;font-weight:normal;font-family:'Liberation Sans',sans-serif;letter-spacing:-0.4px">460</div>
<svg class="a" style="left:37px;top:140px;" width="16" height="560" viewBox="0 0 16 560"><path d="M13.5 1.5H16M13.5 6.5H16M13.5 10.5H16M13.5 15.5H16M10 19.5H16M13.5 23.5H16M13.5 28.5H16M13.5 32.5H16M13.5 37.5H16M0 41.5H16M13.5 45.5H16M13.5 50.5H16M13.5 54.5H16M13.5 59.5H16M10 63.5H16M13.5 68.5H16M13.5 72.5H16M13.5 76.5H16M13.5 81.5H16M0 85.5H16M13.5 90.5H16M13.5 94.5H16M13.5 98.5H16M13.5 103.5H16M10 107.5H16M13.5 112.5H16M13.5 116.5H16M13.5 121.5H16M13.5 125.5H16M0 129.5H16M13.5 134.5H16M13.5 138.5H16M13.5 143.5H16M13.5 147.5H16M10 151.5H16M13.5 156.5H16M13.5 160.5H16M13.5 165.5H16M13.5 169.5H16M0 174.5H16M13.5 178.5H16M13.5 182.5H16M13.5 187.5H16M13.5 191.5H16M10 196.5H16M13.5 200.5H16M13.5 204.5H16M13.5 209.5H16M13.5 213.5H16M0 218.5H16M13.5 222.5H16M13.5 226.5H16M13.5 231.5H16M13.5 235.5H16M10 240.5H16M13.5 244.5H16M13.5 249.5H16M13.5 253.5H16M13.5 257.5H16M0 262.5H16M13.5 266.5H16M13.5 271.5H16M13.5 275.5H16M13.5 279.5H16M10 284.5H16M13.5 288.5H16M13.5 293.5H16M13.5 297.5H16M13.5 302.5H16M0 306.5H16M13.5 310.5H16M13.5 315.5H16M13.5 319.5H16M13.5 324.5H16M10 328.5H16M13.5 332.5H16M13.5 337.5H16M13.5 341.5H16M13.5 346.5H16M0 350.5H16M13.5 355.5H16M13.5 359.5H16M13.5 363.5H16M13.5 368.5H16M10 372.5H16M13.5 377.5H16M13.5 381.5H16M13.5 385.5H16M13.5 390.5H16M0 394.5H16M13.5 399.5H16M13.5 403.5H16M13.5 407.5H16M13.5 412.5H16M10 416.5H16M13.5 421.5H16M13.5 425.5H16M13.5 430.5H16M13.5 434.5H16M0 438.5H16M13.5 443.5H16M13.5 447.5H16M13.5 452.5H16M13.5 456.5H16M10 460.5H16M13.5 465.5H16M13.5 469.5H16M13.5 474.5H16M13.5 478.5H16M0 483.5H16M13.5 487.5H16M13.5 491.5H16M13.5 496.5H16M13.5 500.5H16M10 505.5H16M13.5 509.5H16M13.5 513.5H16M13.5 518.5H16M13.5 522.5H16M0 527.5H16M13.5 531.5H16M13.5 536.5H16M13.5 540.5H16M13.5 544.5H16M10 549.5H16M13.5 553.5H16M13.5 558.5H16" stroke="#b4b4b4" stroke-width="1"/></svg>
<div class="t" style="left:39.6px;top:138.03px;font-size:9.3px;line-height:9.3px;color:#dcdcdc;font-weight:normal;font-family:'Liberation Sans',sans-serif;">0</div>
<div class="t" style="left:39.6px;top:182.18px;font-size:9.3px;line-height:9.3px;color:#dcdcdc;font-weight:normal;font-family:'Liberation Sans',sans-serif;">2</div>
<div class="t" style="left:39.6px;top:190.18px;font-size:9.3px;line-height:9.3px;color:#dcdcdc;font-weight:normal;font-family:'Liberation Sans',sans-serif;">0</div>
<div class="t" style="left:39.6px;top:226.33px;font-size:9.3px;line-height:9.3px;color:#dcdcdc;font-weight:normal;font-family:'Liberation Sans',sans-serif;">4</div>
<div class="t" style="left:39.6px;top:234.33px;font-size:9.3px;line-height:9.3px;color:#dcdcdc;font-weight:normal;font-family:'Liberation Sans',sans-serif;">0</div>
<div class="t" style="left:39.6px;top:270.48px;font-size:9.3px;line-height:9.3px;color:#dcdcdc;font-weight:normal;font-family:'Liberation Sans',sans-serif;">6</div>
<div class="t" style="left:39.6px;top:278.48px;font-size:9.3px;line-height:9.3px;color:#dcdcdc;font-weight:normal;font-family:'Liberation Sans',sans-serif;">0</div>
<div class="t" style="left:39.6px;top:314.63px;font-size:9.3px;line-height:9.3px;color:#dcdcdc;font-weight:normal;font-family:'Liberation Sans',sans-serif;">8</div>
<div class="t" style="left:39.6px;top:322.63px;font-size:9.3px;line-height:9.3px;color:#dcdcdc;font-weight:normal;font-family:'Liberation Sans',sans-serif;">0</div>
<div class="t" style="left:39.6px;top:358.78px;font-size:9.3px;line-height:9.3px;color:#dcdcdc;font-weight:normal;font-family:'Liberation Sans',sans-serif;">1</div>
<div class="t" style="left:39.6px;top:366.78px;font-size:9.3px;line-height:9.3px;color:#dcdcdc;font-weight:normal;font-family:'Liberation Sans',sans-serif;">0</div>
<div class="t" style="left:39.6px;top:374.78px;font-size:9.3px;line-height:9.3px;color:#dcdcdc;font-weight:normal;font-family:'Liberation Sans',sans-serif;">0</div>
<div class="t" style="left:39.6px;top:402.93px;font-size:9.3px;line-height:9.3px;color:#dcdcdc;font-weight:normal;font-family:'Liberation Sans',sans-serif;">1</div>
<div class="t" style="left:39.6px;top:410.93px;font-size:9.3px;line-height:9.3px;color:#dcdcdc;font-weight:normal;font-family:'Liberation Sans',sans-serif;">2</div>
<div class="t" style="left:39.6px;top:418.93px;font-size:9.3px;line-height:9.3px;color:#dcdcdc;font-weight:normal;font-family:'Liberation Sans',sans-serif;">0</div>
<div class="t" style="left:39.6px;top:447.08px;font-size:9.3px;line-height:9.3px;color:#dcdcdc;font-weight:normal;font-family:'Liberation Sans',sans-serif;">1</div>
<div class="t" style="left:39.6px;top:455.08px;font-size:9.3px;line-height:9.3px;color:#dcdcdc;font-weight:normal;font-family:'Liberation Sans',sans-serif;">4</div>
<div class="t" style="left:39.6px;top:463.08px;font-size:9.3px;line-height:9.3px;color:#dcdcdc;font-weight:normal;font-family:'Liberation Sans',sans-serif;">0</div>
<div class="t" style="left:39.6px;top:491.23px;font-size:9.3px;line-height:9.3px;color:#dcdcdc;font-weight:normal;font-family:'Liberation Sans',sans-serif;">1</div>
<div class="t" style="left:39.6px;top:499.23px;font-size:9.3px;line-height:9.3px;color:#dcdcdc;font-weight:normal;font-family:'Liberation Sans',sans-serif;">6</div>
<div class="t" style="left:39.6px;top:507.23px;font-size:9.3px;line-height:9.3px;color:#dcdcdc;font-weight:normal;font-family:'Liberation Sans',sans-serif;">0</div>
<div class="t" style="left:39.6px;top:535.38px;font-size:9.3px;line-height:9.3px;color:#dcdcdc;font-weight:normal;font-family:'Liberation Sans',sans-serif;">1</div>
<div class="t" style="left:39.6px;top:543.38px;font-size:9.3px;line-height:9.3px;color:#dcdcdc;font-weight:normal;font-family:'Liberation Sans',sans-serif;">8</div>
<div class="t" style="left:39.6px;top:551.38px;font-size:9.3px;line-height:9.3px;color:#dcdcdc;font-weight:normal;font-family:'Liberation Sans',sans-serif;">0</div>
<div class="t" style="left:39.6px;top:579.53px;font-size:9.3px;line-height:9.3px;color:#dcdcdc;font-weight:normal;font-family:'Liberation Sans',sans-serif;">2</div>
<div class="t" style="left:39.6px;top:587.53px;font-size:9.3px;line-height:9.3px;color:#dcdcdc;font-weight:normal;font-family:'Liberation Sans',sans-serif;">0</div>
<div class="t" style="left:39.6px;top:595.53px;font-size:9.3px;line-height:9.3px;color:#dcdcdc;font-weight:normal;font-family:'Liberation Sans',sans-serif;">0</div>
<div class="t" style="left:39.6px;top:623.68px;font-size:9.3px;line-height:9.3px;color:#dcdcdc;font-weight:normal;font-family:'Liberation Sans',sans-serif;">2</div>
<div class="t" style="left:39.6px;top:631.68px;font-size:9.3px;line-height:9.3px;color:#dcdcdc;font-weight:normal;font-family:'Liberation Sans',sans-serif;">2</div>
<div class="t" style="left:39.6px;top:639.68px;font-size:9.3px;line-height:9.3px;color:#dcdcdc;font-weight:normal;font-family:'Liberation Sans',sans-serif;">0</div>
<div class="t" style="left:39.6px;top:667.83px;font-size:9.3px;line-height:9.3px;color:#dcdcdc;font-weight:normal;font-family:'Liberation Sans',sans-serif;">2</div>
<div class="t" style="left:39.6px;top:675.83px;font-size:9.3px;line-height:9.3px;color:#dcdcdc;font-weight:normal;font-family:'Liberation Sans',sans-serif;">4</div>
<div class="t" style="left:39.6px;top:683.83px;font-size:9.3px;line-height:9.3px;color:#dcdcdc;font-weight:normal;font-family:'Liberation Sans',sans-serif;">0</div>
<svg class="a" style="left:37px;top:124px;" width="16" height="16" viewBox="0 0 16 16"><path d="M3 8.5H14M8.5 3V15" stroke="#aaa" stroke-dasharray="1 1"/></svg>
<svg class="a" style="left:634px;top:125px;" width="1" height="15" viewBox="0 0 1 15"><path d="M0.5 0V15" stroke="#ddd" stroke-dasharray="1 1"/></svg>
<svg class="a" style="left:39px;top:659px;" width="13" height="1" viewBox="0 0 13 1"><path d="M0 0.5H13" stroke="#ddd" stroke-dasharray="1 1"/></svg>
<svg class="a" style="left:9px;top:70px;" width="3" height="21" viewBox="0 0 3 21"><rect x="0" y="0" width="3" height="1" fill="#111"/><rect x="0" y="2" width="3" height="1" fill="#111"/><rect x="0" y="4" width="3" height="1" fill="#111"/><rect x="0" y="6" width="3" height="1" fill="#111"/><rect x="0" y="8" width="3" height="1" fill="#111"/><rect x="0" y="10" width="3" height="1" fill="#111"/><rect x="0" y="12" width="3" height="1" fill="#111"/><rect x="0" y="14" width="3" height="1" fill="#111"/><rect x="0" y="16" width="3" height="1" fill="#111"/><rect x="0" y="18" width="3" height="1" fill="#111"/></svg>
<svg class="a" style="left:27px;top:71px;" width="20" height="20" viewBox="0 0 20 20"><rect x="0.5" y="0.5" width="4.2" height="4.2" fill="#d8d8d8" stroke="#d8d8d8" stroke-width="1.1"/><rect x="7.5" y="0.5" width="4.2" height="4.2" fill="#3e3e3e" stroke="#d8d8d8" stroke-width="1.1"/><rect x="14.5" y="0.5" width="4.2" height="4.2" fill="#3e3e3e" stroke="#d8d8d8" stroke-width="1.1"/><rect x="0.5" y="7.5" width="4.2" height="4.2" fill="#3e3e3e" stroke="#d8d8d8" stroke-width="1.1"/><rect x="7.5" y="7.5" width="4.2" height="4.2" fill="#3e3e3e" stroke="#d8d8d8" stroke-width="1.1"/><rect x="14.5" y="7.5" width="4.2" height="4.2" fill="#3e3e3e" stroke="#d8d8d8" stroke-width="1.1"/><rect x="0.5" y="14.5" width="4.2" height="4.2" fill="#3e3e3e" stroke="#d8d8d8" stroke-width="1.1"/><rect x="7.5" y="14.5" width="4.2" height="4.2" fill="#3e3e3e" stroke="#d8d8d8" stroke-width="1.1"/><rect x="14.5" y="14.5" width="4.2" height="4.2" fill="#3e3e3e" stroke="#d8d8d8" stroke-width="1.1"/><path d="M5 2.6H7M12 2.6H14M5 16.6H7M12 16.6H14M2.6 5V7M2.6 12V14M16.6 5V7M16.6 12V14" stroke="#d0d0d0"/></svg>
<div class="t" style="left:57px;top:64.83px;font-size:10px;line-height:10px;color:#dadada;font-weight:normal;font-family:'Liberation Sans',sans-serif;-webkit-text-stroke:0.3px #dadada">X:</div>
<div class="t" style="left:57px;top:85.83px;font-size:10px;line-height:10px;color:#dadada;font-weight:normal;font-family:'Liberation Sans',sans-serif;-webkit-text-stroke:0.3px #dadada">Y:</div>
<div class="t" style="left:156px;top:64.83px;font-size:10px;line-height:10px;color:#dadada;font-weight:normal;font-family:'Liberation Sans',sans-serif;-webkit-text-stroke:0.3px #dadada">B:</div>
<div class="t" style="left:156px;top:85.83px;font-size:10px;line-height:10px;color:#dadada;font-weight:normal;font-family:'Liberation Sans',sans-serif;-webkit-text-stroke:0.3px #dadada">H:</div>
<svg class="a" style="left:70px;top:63px;" width="13" height="14" viewBox="0 0 13 14"><rect x="0.5" y="0.5" width="12" height="13" fill="#555" stroke="#363636"/><path d="M0.5 7.0H12.5" stroke="#3a3a3a"/><path d="M3.0 5.5L6.5 2.5L10.0 5.5Z M3.0 8.5L6.5 11.5L10.0 8.5Z" fill="#9a9a9a"/></svg>
<svg class="a" style="left:70px;top:84px;" width="13" height="14" viewBox="0 0 13 14"><rect x="0.5" y="0.5" width="12" height="13" fill="#555" stroke="#363636"/><path d="M0.5 7.0H12.5" stroke="#3a3a3a"/><path d="M3.0 5.5L6.5 2.5L10.0 5.5Z M3.0 8.5L6.5 11.5L10.0 8.5Z" fill="#9a9a9a"/></svg>
<svg class="a" style="left:168px;top:63px;" width="13" height="14" viewBox="0 0 13 14"><rect x="0.5" y="0.5" width="12" height="13" fill="#555" stroke="#363636"/><path d="M0.5 7.0H12.5" stroke="#3a3a3a"/><path d="M3.0 5.5L6.5 2.5L10.0 5.5Z M3.0 8.5L6.5 11.5L10.0 8.5Z" fill="#9a9a9a"/></svg>
<svg class="a" style="left:168px;top:84px;" width="13" height="14" viewBox="0 0 13 14"><rect x="0.5" y="0.5" width="12" height="13" fill="#555" stroke="#363636"/><path d="M0.5 7.0H12.5" stroke="#3a3a3a"/><path d="M3.0 5.5L6.5 2.5L10.0 5.5Z M3.0 8.5L6.5 11.5L10.0 8.5Z" fill="#9a9a9a"/></svg>
<div class="a" style="left:85px;top:64px;width:62px;height:13px;background:#8b8b8b;border:1px solid #3a3a3a"></div>
<div class="a" style="left:85px;top:85px;width:62px;height:13px;background:#8b8b8b;border:1px solid #3a3a3a"></div>
<div class="a" style="left:184px;top:64px;width:62px;height:13px;background:#8b8b8b;border:1px solid #3a3a3a"></div>
<div class="a" style="left:184px;top:85px;width:62px;height:13px;background:#8b8b8b;border:1px solid #3a3a3a"></div>
<svg class="a" style="left:251px;top:73px;" width="16" height="16" viewBox="0 0 16 16"><g fill="none" stroke="#ddd" stroke-width="1.6"><path d="M5 7.2V5A3 3 0 0 1 11 5V7.2M5 8.8V11A3 3 0 0 0 11 11V8.8"/></g><path d="M0.5 8H3.5M12.5 8H15.5M1 3.5L3 5.5M15 3.5L13 5.5M1 12.5L3 10.5M15 12.5L13 10.5" stroke="#ddd"/></svg>
<div class="a" style="left:272px;top:60px;width:1px;height:42px;background:#3a3a3a;"></div>
<div class="a" style="left:273px;top:60px;width:1px;height:42px;background:#585858;"></div>
<svg class="a" style="left:279px;top:63px;" width="15" height="15" viewBox="0 0 15 15"><path d="M14.5 1V14.5H1" fill="none" stroke="#ddd" stroke-dasharray="1 1"/><path d="M0.5 14.5V0.5H14.5V2" stroke="#eee" fill="none"/><path d="M2 7.5H10" stroke="#eee" stroke-width="2"/><path d="M9 4L13 7.5L9 11Z" fill="#eee"/></svg>
<svg class="a" style="left:279px;top:84px;" width="15" height="15" viewBox="0 0 15 15"><path d="M14.5 1V14.5H1" fill="none" stroke="#ddd" stroke-dasharray="1 1"/><path d="M0.5 14.5V0.5H14.5V2" stroke="#eee" fill="none"/><path d="M7.5 2V10" stroke="#eee" stroke-width="2"/><path d="M4 9L7.5 13L11 9Z" fill="#eee"/></svg>
<svg class="a" style="left:296px;top:63px;" width="13" height="14" viewBox="0 0 13 14"><rect x="0.5" y="0.5" width="12" height="13" fill="#555" stroke="#363636"/><path d="M0.5 7.0H12.5" stroke="#3a3a3a"/><path d="M3.0 5.5L6.5 2.5L10.0 5.5Z M3.0 8.5L6.5 11.5L10.0 8.5Z" fill="#9a9a9a"/></svg>
<svg class="a" style="left:296px;top:84px;" width="13" height="14" viewBox="0 0 13 14"><rect x="0.5" y="0.5" width="12" height="13" fill="#555" stroke="#363636"/><path d="M0.5 7.0H12.5" stroke="#3a3a3a"/><path d="M3.0 5.5L6.5 2.5L10.0 5.5Z M3.0 8.5L6.5 11.5L10.0 8.5Z" fill="#9a9a9a"/></svg>
<div class="a" style="left:311px;top:64px;width:62px;height:13px;background:#8b8b8b;border:1px solid #3a3a3a"></div>
<div class="a" style="left:360px;top:65px;width:12px;height:11px;background:#6f6f6f;"></div>
<svg class="a" style="left:363px;top:68.5px;" width="7" height="5" viewBox="0 0 7 5"><path d="M0 0H7L3.5 4.5Z" fill="#444"/></svg>
<div class="a" style="left:311px;top:85px;width:62px;height:13px;background:#8b8b8b;border:1px solid #3a3a3a"></div>
<div class="a" style="left:360px;top:86px;width:12px;height:11px;background:#6f6f6f;"></div>
<svg class="a" style="left:363px;top:89.5px;" width="7" height="5" viewBox="0 0 7 5"><path d="M0 0H7L3.5 4.5Z" fill="#444"/></svg>
<div class="a" style="left:379px;top:71px;width:18px;height:22px;background:#2e2e2e;border:1px solid #3c3c3c"></div>
<svg class="a" style="left:383px;top:74px;" width="10" height="16" viewBox="0 0 10 16"><g fill="none" stroke="#e6e6e6" stroke-width="1.8"><path d="M1.5 6.5V4.5A3.5 3.5 0 0 1 8.5 4.5V6.5M1.5 9.5V11.5A3.5 3.5 0 0 0 8.5 11.5V9.5M5 5.5V10.5"/></g></svg>
<svg class="a" style="left:402px;top:66px;" width="13" height="10" viewBox="0 0 13 10"><path d="M0.5 9.5H12.5L9.5 1Z" fill="#6a6a6a" stroke="#ddd"/></svg>
<svg class="a" style="left:402px;top:85px;" width="13" height="11" viewBox="0 0 13 11"><path d="M4 0.5H12.5L9 10.5H0.5Z" fill="#6a6a6a" stroke="#ddd"/></svg>
<svg class="a" style="left:418px;top:63px;" width="13" height="14" viewBox="0 0 13 14"><rect x="0.5" y="0.5" width="12" height="13" fill="#555" stroke="#363636"/><path d="M0.5 7.0H12.5" stroke="#3a3a3a"/><path d="M3.0 5.5L6.5 2.5L10.0 5.5Z M3.0 8.5L6.5 11.5L10.0 8.5Z" fill="#9a9a9a"/></svg>
<svg class="a" style="left:418px;top:84px;" width="13" height="14" viewBox="0 0 13 14"><rect x="0.5" y="0.5" width="12" height="13" fill="#555" stroke="#363636"/><path d="M0.5 7.0H12.5" stroke="#3a3a3a"/><path d="M3.0 5.5L6.5 2.5L10.0 5.5Z M3.0 8.5L6.5 11.5L10.0 8.5Z" fill="#9a9a9a"/></svg>
<div class="a" style="left:433px;top:64px;width:62px;height:13px;background:#8b8b8b;border:1px solid #3a3a3a"></div>
<div class="a" style="left:482px;top:65px;width:12px;height:11px;background:#6f6f6f;"></div>
<svg class="a" style="left:485px;top:68.5px;" width="7" height="5" viewBox="0 0 7 5"><path d="M0 0H7L3.5 4.5Z" fill="#444"/></svg>
<div class="a" style="left:433px;top:85px;width:62px;height:13px;background:#8b8b8b;border:1px solid #3a3a3a"></div>
<div class="a" style="left:482px;top:86px;width:12px;height:11px;background:#6f6f6f;"></div>
<svg class="a" style="left:485px;top:89.5px;" width="7" height="5" viewBox="0 0 7 5"><path d="M0 0H7L3.5 4.5Z" fill="#444"/></svg>
<div class="a" style="left:503px;top:60px;width:1px;height:42px;background:#3a3a3a;"></div>
<div class="a" style="left:504px;top:60px;width:1px;height:42px;background:#585858;"></div>
<svg class="a" style="left:510px;top:63px;" width="16" height="15" viewBox="0 0 16 15"><path d="M13 5A6 6 0 1 0 13.5 9" stroke="#777" fill="none" stroke-width="1.4" stroke-dasharray="2 1"/><path d="M10 1L14.5 5L9.5 6Z" fill="#777"/></svg>
<svg class="a" style="left:536px;top:63px;" width="16" height="15" viewBox="0 0 16 15"><path d="M3 5A6 6 0 1 1 2.5 9" stroke="#777" fill="none" stroke-width="1.4" stroke-dasharray="2 1"/><path d="M6 1L1.5 5L6.5 6Z" fill="#777"/></svg>
<svg class="a" style="left:510px;top:84px;" width="17" height="15" viewBox="0 0 17 15"><path d="M0 3L7 7.5L0 12ZM17 3L10 7.5L17 12Z" fill="#777"/><path d="M8.5 0V15" stroke="#aaa" stroke-dasharray="1 1"/><path d="M4 4A5 5 0 0 1 13 4" stroke="#777" fill="none"/></svg>
<svg class="a" style="left:536px;top:84px;" width="17" height="15" viewBox="0 0 17 15"><path d="M3 0L8 6L13 0ZM3 15L8 9L13 15Z" fill="#777"/><path d="M0 7.5H17" stroke="#aaa" stroke-dasharray="1 1"/><path d="M13 3A5 5 0 0 1 13 12" stroke="#777" fill="none"/></svg>
<svg class="a" style="left:558px;top:70px;" width="27" height="23" viewBox="0 0 27 23"><path d="M0.5 4V0.5H4M23 0.5H26.5V4M26.5 19V22.5H23M4 22.5H0.5V19" stroke="#777" fill="none"/><text x="7" y="19" font-family="Liberation Serif" font-size="20" fill="#888">P</text></svg>
<div class="a" style="left:590px;top:60px;width:1px;height:42px;background:#3a3a3a;"></div>
<div class="a" style="left:591px;top:60px;width:1px;height:42px;background:#585858;"></div>
<svg class="a" style="left:596px;top:61px;" width="14" height="17" viewBox="0 0 14 17"><path d="M3 4L7 0L11 4Z" fill="#aaa"/><g transform="translate(0,6)"><g fill="none" stroke="#aaa" stroke-width="1"><rect x="5.5" y="0.5" width="3" height="3"/><path d="M7 3.5V5.5M2 5.5H12M2 5.5V7.5M7 5.5V7.5M12 5.5V7.5"/><rect x="0.5" y="7.5" width="3" height="3"/><rect x="5.5" y="7.5" width="3" height="3"/><rect x="10.5" y="7.5" width="3" height="3"/></g></g></svg>
<svg class="a" style="left:619px;top:62px;" width="20" height="12" viewBox="0 0 20 12"><path d="M4 3L0 6L4 9Z" fill="#ddd"/><g transform="translate(6,0)"><g fill="none" stroke="#ddd" stroke-width="1"><rect x="5.5" y="0.5" width="3" height="3"/><path d="M7 3.5V5.5M2 5.5H12M2 5.5V7.5M7 5.5V7.5M12 5.5V7.5"/><rect x="0.5" y="7.5" width="3" height="3"/><rect x="5.5" y="7.5" width="3" height="3"/><rect x="10.5" y="7.5" width="3" height="3"/></g></g></svg>
<svg class="a" style="left:596px;top:83px;" width="14" height="17" viewBox="0 0 14 17"><g fill="none" stroke="#aaa" stroke-width="1"><rect x="5.5" y="0.5" width="3" height="3"/><path d="M7 3.5V5.5M2 5.5H12M2 5.5V7.5M7 5.5V7.5M12 5.5V7.5"/><rect x="0.5" y="7.5" width="3" height="3"/><rect x="5.5" y="7.5" width="3" height="3"/><rect x="10.5" y="7.5" width="3" height="3"/></g><path d="M3 13L7 17L11 13Z" fill="#aaa"/></svg>
<svg class="a" style="left:619px;top:85px;" width="20" height="12" viewBox="0 0 20 12"><g fill="none" stroke="#ddd" stroke-width="1"><rect x="5.5" y="0.5" width="3" height="3"/><path d="M7 3.5V5.5M2 5.5H12M2 5.5V7.5M7 5.5V7.5M12 5.5V7.5"/><rect x="0.5" y="7.5" width="3" height="3"/><rect x="5.5" y="7.5" width="3" height="3"/><rect x="10.5" y="7.5" width="3" height="3"/></g><path d="M15 2L19 5.5L15 9Z" fill="#ddd"/></svg>
<div class="a" style="left:645px;top:60px;width:1px;height:42px;background:#3a3a3a;"></div>
<div class="a" style="left:646px;top:60px;width:1px;height:42px;background:#585858;"></div>
<svg class="a" style="left:651px;top:62px;" width="17" height="17" viewBox="0 0 17 17"><rect x="0.5" y="0.5" width="16" height="16" fill="#fff" stroke="#2a2a2a"/><path d="M1 16L16 1" stroke="#b0102a" stroke-width="2"/></svg>
<div class="a" style="left:671px;top:64px;width:12px;height:14px;background:#5a5a5a;border:1px solid #333"></div>
<svg class="a" style="left:674px;top:67px;" width="6" height="8" viewBox="0 0 6 8"><path d="M0 0L6 4L0 8Z" fill="#ddd"/></svg>
<div class="a" style="left:651px;top:83px;width:17px;height:17px;background:#000;border:1px solid #777"></div>
<div class="a" style="left:655px;top:87px;width:9px;height:9px;background:#333;border:1px solid #888"></div>
<div class="a" style="left:671px;top:85px;width:12px;height:14px;background:#5a5a5a;border:1px solid #333"></div>
<svg class="a" style="left:674px;top:88px;" width="6" height="8" viewBox="0 0 6 8"><path d="M0 0L6 4L0 8Z" fill="#ddd"/></svg>
<div class="a" style="left:690px;top:60px;width:1px;height:42px;background:#3a3a3a;"></div>
<div class="a" style="left:691px;top:60px;width:1px;height:42px;background:#585858;"></div>
<svg class="a" style="left:696px;top:64px;" width="13" height="14" viewBox="0 0 13 14"><rect x="0.5" y="0.5" width="12" height="13" fill="#555" stroke="#363636"/><path d="M0.5 7.0H12.5" stroke="#3a3a3a"/><path d="M3.0 5.5L6.5 2.5L10.0 5.5Z M3.0 8.5L6.5 11.5L10.0 8.5Z" fill="#9a9a9a"/></svg>
<div class="a" style="left:710px;top:64px;width:63px;height:14px;background:#a6a6a6;border:1px solid #3a3a3a"></div>
<div class="a" style="left:760px;top:65px;width:12px;height:12px;background:#777;"></div>
<svg class="a" style="left:763px;top:69.0px;" width="7" height="5" viewBox="0 0 7 5"><path d="M0 0H7L3.5 4.5Z" fill="#444"/></svg>
<div class="t" id="f83" style="left:714.3px;top:66.53px;font-size:10px;line-height:10px;color:#222;font-weight:normal;font-family:'Liberation Sans',sans-serif;transform:scaleX(0.8878);transform-origin:0 0;">1 Pt</div>
<div class="a" style="left:696px;top:84px;width:77px;height:14px;background:#a6a6a6;border:1px solid #3a3a3a"></div>
<div class="a" style="left:698px;top:86px;width:61px;height:10px;background:#000;"></div>
<div class="a" style="left:760px;top:85px;width:12px;height:12px;background:#777;"></div>
<svg class="a" style="left:763px;top:89px;" width="7" height="5" viewBox="0 0 7 5"><path d="M0 0H7L3.5 4.5Z" fill="#444"/></svg>
<div class="a" style="left:782px;top:60px;width:1px;height:42px;background:#3a3a3a;"></div>
<div class="a" style="left:783px;top:60px;width:1px;height:42px;background:#585858;"></div>
<svg class="a" style="left:790px;top:63px;" width="14" height="15" viewBox="0 0 14 15"><rect x="0.5" y="0.5" width="11" height="11" fill="none" stroke="#ddd" stroke-dasharray="2 1"/><rect x="2.5" y="2.5" width="7" height="7" fill="#555"/><path d="M11 13H14L12.5 15Z" fill="#ddd"/></svg>
<svg class="a" style="left:816px;top:63px;" width="14" height="14" viewBox="0 0 14 14"><rect x="0.5" y="0.5" width="11" height="11" fill="#777" stroke="#ddd"/><path d="M12 2V13H2" stroke="#999" stroke-width="2" fill="none"/></svg>
<div class="t" style="left:841px;top:65.28px;font-size:14px;line-height:14px;color:#ddd;font-weight:normal;font-family:'Liberation Serif',serif;"><i>fx</i></div>
<svg class="a" style="left:854px;top:74px;" width="4" height="3" viewBox="0 0 4 3"><path d="M0 0H4L2 2.5Z" fill="#ddd"/></svg>
<svg class="a" style="left:788px;top:85px;" width="12" height="12" viewBox="0 0 12 12"><rect x="0" y="0" width="3" height="3" fill="#ddd"/><rect x="3" y="0" width="3" height="3" fill="#777"/><rect x="6" y="0" width="3" height="3" fill="#ddd"/><rect x="9" y="0" width="3" height="3" fill="#777"/><rect x="0" y="3" width="3" height="3" fill="#777"/><rect x="3" y="3" width="3" height="3" fill="#ddd"/><rect x="6" y="3" width="3" height="3" fill="#777"/><rect x="9" y="3" width="3" height="3" fill="#ddd"/><rect x="0" y="6" width="3" height="3" fill="#ddd"/><rect x="3" y="6" width="3" height="3" fill="#777"/><rect x="6" y="6" width="3" height="3" fill="#ddd"/><rect x="9" y="6" width="3" height="3" fill="#777"/><rect x="0" y="9" width="3" height="3" fill="#777"/><rect x="3" y="9" width="3" height="3" fill="#ddd"/><rect x="6" y="9" width="3" height="3" fill="#777"/><rect x="9" y="9" width="3" height="3" fill="#ddd"/></svg>
<div class="a" style="left:806px;top:84px;width:38px;height:14px;background:#a6a6a6;border:1px solid #3a3a3a"></div>
<div class="t" id="f84" style="left:808.8px;top:86.53px;font-size:10px;line-height:10px;color:#222;font-weight:normal;font-family:'Liberation Sans',sans-serif;transform:scaleX(0.9450);transform-origin:0 0;">100 %</div>
<div class="a" style="left:844px;top:84px;width:12px;height:14px;background:#5a5a5a;border:1px solid #333"></div>
<svg class="a" style="left:847px;top:87px;" width="6" height="8" viewBox="0 0 6 8"><path d="M0 0L6 4L0 8Z" fill="#ddd"/></svg>
<div class="a" style="left:863px;top:60px;width:1px;height:42px;background:#3a3a3a;"></div>
<div class="a" style="left:864px;top:60px;width:1px;height:42px;background:#585858;"></div>
<div class="a" style="left:866px;top:61px;width:21px;height:19px;background:#2b2b2b;"></div>
<svg class="a" style="left:869px;top:64px;" width="15" height="13" viewBox="0 0 15 13"><path d="M0 0.5H15" stroke="#ddd"/><path d="M0 2.5H15" stroke="#ddd"/><path d="M0 4.5H15" stroke="#ddd"/><path d="M0 6.5H15" stroke="#ddd"/><path d="M0 8.5H15" stroke="#ddd"/><path d="M0 10.5H15" stroke="#ddd"/><path d="M0 12.5H15" stroke="#ddd"/></svg>
<svg class="a" style="left:897px;top:63px;" width="15" height="14" viewBox="0 0 15 14"><path d="M0 0.5H15M0 13.5H15M0 3H2M13 3H15M0 6H2M13 6H15M0 9H2M13 9H15M0 11H2M13 11H15" stroke="#ddd"/><rect x="3.5" y="2.5" width="8" height="9" fill="#888" stroke="#ddd"/></svg>
<svg class="a" style="left:870px;top:84px;" width="15" height="14" viewBox="0 0 15 14"><path d="M0 0.5H15M0 13.5H15M0 4H3M12 4H15M0 7H2M13 7H15M0 10H3M12 10H15" stroke="#ddd"/><circle cx="7.5" cy="7" r="4.8" fill="#ddd"/></svg>
<svg class="a" style="left:897px;top:84px;" width="15" height="14" viewBox="0 0 15 14"><path d="M0 0.5H15M0 3H15M0 11H15M0 13.5H15" stroke="#ddd"/><rect x="3.5" y="5" width="8" height="4" fill="#999" stroke="#ddd"/></svg>
<div class="a" style="left:920px;top:60px;width:1px;height:42px;background:#3a3a3a;"></div>
<div class="a" style="left:921px;top:60px;width:1px;height:42px;background:#585858;"></div>
<svg class="a" style="left:926px;top:63px;" width="13" height="14" viewBox="0 0 13 14"><rect x="2" y="2" width="9" height="10" fill="none" stroke="#9ab"/><rect x="0" y="0" width="3" height="3" fill="#39a0e0"/><rect x="10" y="0" width="3" height="3" fill="#39a0e0"/><rect x="0" y="11" width="3" height="3" fill="#39a0e0"/><rect x="10" y="11" width="3" height="3" fill="#39a0e0"/></svg>
<svg class="a" style="left:946px;top:64px;" width="13" height="14" viewBox="0 0 13 14"><rect x="0.5" y="0.5" width="12" height="13" fill="#555" stroke="#363636"/><path d="M0.5 7.0H12.5" stroke="#3a3a3a"/><path d="M3.0 5.5L6.5 2.5L10.0 5.5Z M3.0 8.5L6.5 11.5L10.0 8.5Z" fill="#9a9a9a"/></svg>
<div class="a" style="left:960px;top:64px;width:47px;height:14px;background:#a6a6a6;border:1px solid #3a3a3a"></div>
<div class="t" id="f85" style="left:962.3px;top:66.53px;font-size:10px;line-height:10px;color:#222;font-weight:normal;font-family:'Liberation Sans',sans-serif;transform:scaleX(0.9490);transform-origin:0 0;">4,233 mm</div>
<div class="a" style="left:946px;top:85px;width:39px;height:12px;background:#8a8a8a;border:1px solid #3a3a3a"></div>
<svg class="a" style="left:950px;top:87px;" width="30" height="8" viewBox="0 0 30 8"><path d="M0 1.5H27V8" stroke="#555" stroke-width="2" fill="none"/></svg>
<div class="a" style="left:986px;top:85px;width:12px;height:12px;background:#6f6f6f;"></div>
<svg class="a" style="left:989px;top:89px;" width="7" height="5" viewBox="0 0 7 5"><path d="M0 0H7L3.5 4.5Z" fill="#ddd"/></svg>
<div class="a" style="left:1016px;top:60px;width:1px;height:42px;background:#3a3a3a;"></div>
<div class="a" style="left:1017px;top:60px;width:1px;height:42px;background:#585858;"></div>
<svg class="a" style="left:1023px;top:63px;" width="16" height="16" viewBox="0 0 16 16"><circle cx="1.5" cy="1.5" r="1.3" fill="none" stroke="#ddd" stroke-width="0.9"/><circle cx="1.5" cy="5.5" r="1.3" fill="none" stroke="#ddd" stroke-width="0.9"/><circle cx="1.5" cy="9.5" r="1.3" fill="none" stroke="#ddd" stroke-width="0.9"/><circle cx="5.5" cy="1.5" r="1.3" fill="none" stroke="#ddd" stroke-width="0.9"/><circle cx="5.5" cy="9.5" r="1.3" fill="none" stroke="#ddd" stroke-width="0.9"/><circle cx="9.5" cy="1.5" r="1.3" fill="none" stroke="#ddd" stroke-width="0.9"/><circle cx="9.5" cy="5.5" r="1.3" fill="none" stroke="#ddd" stroke-width="0.9"/><circle cx="9.5" cy="9.5" r="1.3" fill="none" stroke="#ddd" stroke-width="0.9"/><path d="M11.5 13H14.5L13 14.8Z" fill="#ddd"/></svg>
<div class="a" style="left:1045px;top:63px;width:131px;height:13px;background:#a9a9a9;border:1px solid #3a3a3a"></div>
<div class="t" id="f86" style="left:1048px;top:64.61px;font-size:10.5px;line-height:10.5px;color:#222;font-weight:normal;font-family:'Liberation Sans',sans-serif;transform:scaleX(0.8653);transform-origin:0 0;">[Einfacher Grafikrahmen]</div>
<div class="a" style="left:1163px;top:64px;width:12px;height:11px;background:#777;"></div>
<svg class="a" style="left:1166px;top:67px;" width="7" height="5" viewBox="0 0 7 5"><path d="M0 0H7L3.5 4.5Z" fill="#ddd"/></svg>
<svg class="a" style="left:1127px;top:86px;" width="22" height="11" viewBox="0 0 22 11"><rect x="0.5" y="0.5" width="7" height="7" fill="#888" stroke="#aaa"/><rect x="3.5" y="3.5" width="7" height="7" fill="#444" stroke="#aaa"/><path d="M15 4A3.5 3.5 0 1 1 15 10M14 2L12 4L15 5.5" stroke="#aaa" fill="none"/></svg>
<svg class="a" style="left:1155px;top:86px;" width="22" height="11" viewBox="0 0 22 11"><rect x="0.5" y="0.5" width="10" height="10" fill="#888" stroke="#aaa"/><path d="M13 10L20 3M16 3H20V7" stroke="#aaa" fill="none"/></svg>
<div class="a" style="left:1181px;top:60px;width:1px;height:42px;background:#3a3a3a;"></div>
<div class="a" style="left:1182px;top:60px;width:1px;height:42px;background:#585858;"></div>
<svg class="a" style="left:1230px;top:70px;" width="10" height="17" viewBox="0 0 10 17"><path d="M6 0L1 9H5L3 17L9 6H5Z" fill="#ddd"/></svg>
<div class="a" style="left:1252px;top:60px;width:1px;height:42px;background:#3a3a3a;"></div>
<div class="a" style="left:1253px;top:60px;width:1px;height:42px;background:#585858;"></div>
<svg class="a" style="left:1257px;top:75px;" width="20" height="9" viewBox="0 0 20 9"><path d="M0 2H5L2.5 5Z" fill="#ddd"/><path d="M7 0.5H19M7 3H19M7 5.5H19M7 8H19" stroke="#ddd"/></svg>
<svg class="a" style="left:10px;top:120px;" width="19" height="4" viewBox="0 0 19 4"><rect x="0" y="0" width="1" height="4" fill="#111"/><rect x="2" y="0" width="1" height="4" fill="#111"/><rect x="4" y="0" width="1" height="4" fill="#111"/><rect x="6" y="0" width="1" height="4" fill="#111"/><rect x="8" y="0" width="1" height="4" fill="#111"/><rect x="10" y="0" width="1" height="4" fill="#111"/><rect x="12" y="0" width="1" height="4" fill="#111"/><rect x="14" y="0" width="1" height="4" fill="#111"/><rect x="16" y="0" width="1" height="4" fill="#111"/><rect x="18" y="0" width="1" height="4" fill="#111"/></svg>
<div class="a" style="left:8px;top:133px;width:24px;height:20px;background:#333;"></div>
<div class="a" style="left:5px;top:241px;width:30px;height:1px;background:#3a3a3a;"></div>
<div class="a" style="left:5px;top:242px;width:30px;height:1px;background:#525252;"></div>
<div class="a" style="left:5px;top:374px;width:30px;height:1px;background:#3a3a3a;"></div>
<div class="a" style="left:5px;top:375px;width:30px;height:1px;background:#525252;"></div>
<div class="a" style="left:5px;top:466px;width:30px;height:1px;background:#3a3a3a;"></div>
<div class="a" style="left:5px;top:467px;width:30px;height:1px;background:#525252;"></div>
<div class="a" style="left:5px;top:555px;width:30px;height:1px;background:#3a3a3a;"></div>
<div class="a" style="left:5px;top:556px;width:30px;height:1px;background:#525252;"></div>
<div class="a" style="left:5px;top:608px;width:30px;height:1px;background:#3a3a3a;"></div>
<div class="a" style="left:5px;top:609px;width:30px;height:1px;background:#525252;"></div>
<div class="a" style="left:5px;top:635px;width:30px;height:1px;background:#3a3a3a;"></div>
<div class="a" style="left:5px;top:636px;width:30px;height:1px;background:#525252;"></div>
<div class="a" style="left:5px;top:663px;width:30px;height:1px;background:#3a3a3a;"></div>
<div class="a" style="left:5px;top:664px;width:30px;height:1px;background:#525252;"></div>
<svg class="a" style="left:14px;top:136px;" width="12" height="16" viewBox="0 0 12 16"><path d="M1 1V13L4 10L7 15L9 14L6.5 9H11Z" fill="none" stroke="#d9d9d9" stroke-width="1.3"/></svg>
<svg class="a" style="left:14px;top:156px;" width="12" height="15" viewBox="0 0 12 15"><path d="M1 1V13L4 10L7 15L9 14L6.5 9H11Z" fill="#d9d9d9"/></svg>
<svg class="a" style="left:13px;top:177px;" width="15" height="17" viewBox="0 0 15 17"><path d="M1 1H7L11 5V16H1Z" fill="#d9d9d9"/><path d="M7 1V5H11" fill="#888"/><path d="M9 10V17L11 15L13 17Z" fill="#d9d9d9" stroke="#474747" stroke-width="0.5"/></svg>
<svg class="a" style="left:10px;top:198px;" width="20" height="13" viewBox="0 0 20 13"><path d="M1 0V13M19 0V13" stroke="#d9d9d9" stroke-width="1.6"/><path d="M4 6.5H16" stroke="#d9d9d9" stroke-width="1.6"/><path d="M3 6.5L7 3V10ZM17 6.5L13 3V10Z" fill="#d9d9d9"/></svg>
<svg class="a" style="left:12px;top:218px;" width="17" height="16" viewBox="0 0 17 16"><path d="M1 6V15H16V6" stroke="#d9d9d9" stroke-width="1.5" fill="none"/><path d="M4 10H6M8 10H10M12 10H14M4 13H14" stroke="#d9d9d9"/><path d="M5 1L10 6M10 3V6H7" stroke="#d9d9d9" stroke-width="1.3" fill="none"/></svg>
<div class="t" style="left:12px;top:248.09px;font-size:19px;line-height:19px;color:#d9d9d9;font-weight:normal;font-family:'Liberation Serif',serif;">T</div>
<svg class="a" style="left:28px;top:259px;" width="3" height="3" viewBox="0 0 3 3"><path d="M3 0V3H0Z" fill="#ddd"/></svg>
<svg class="a" style="left:12px;top:267px;" width="16" height="16" viewBox="0 0 16 16"><path d="M1 15L15 1" stroke="#d9d9d9" stroke-width="1.4"/></svg>
<svg class="a" style="left:11px;top:287px;" width="19" height="20" viewBox="0 0 19 20"><path d="M1 18L3.5 9.5L10 4.5L14.5 9L9.5 15.5Z" fill="#d9d9d9"/><path d="M1.5 17.5L7.5 11.5" stroke="#555" stroke-width="0.9"/><circle cx="7.8" cy="11.2" r="1" fill="#555"/><path d="M11.5 3L14 0.5L18.5 5L16 7.5Z" fill="#d9d9d9"/><path d="M19 15V19H15Z" fill="#ddd"/></svg>
<svg class="a" style="left:12px;top:310px;" width="17" height="16" viewBox="0 0 17 16"><path d="M2 14L4 9L12 1L15 4L7 12Z" fill="#d9d9d9"/><path d="M16 12V15H13Z" fill="#ddd"/></svg>
<svg class="a" style="left:13px;top:332px;" width="16" height="16" viewBox="0 0 16 16"><rect x="0.8" y="0.8" width="13" height="12" fill="#777" stroke="#d9d9d9" stroke-width="1.4"/><path d="M1 1L14 13M14 1L1 13" stroke="#d9d9d9" stroke-width="1.2"/><path d="M16 13V16H13Z" fill="#ddd"/></svg>
<svg class="a" style="left:13px;top:354px;" width="16" height="16" viewBox="0 0 16 16"><rect x="0.8" y="0.8" width="13" height="12" fill="#888" stroke="#d9d9d9" stroke-width="1.4"/><path d="M16 13V16H13Z" fill="#ddd"/></svg>
<svg class="a" style="left:11px;top:378px;" width="18" height="16" viewBox="0 0 18 16"><circle cx="14" cy="3.8" r="2.8" fill="none" stroke="#d9d9d9" stroke-width="1.5"/><circle cx="14" cy="12.2" r="2.8" fill="none" stroke="#d9d9d9" stroke-width="1.5"/><path d="M1 2.5L11.5 10L12 8.5Z M1 13.5L11.5 6L12 7.5Z" fill="#d9d9d9" stroke="#d9d9d9" stroke-width="1.2" stroke-linejoin="round"/></svg>
<svg class="a" style="left:11px;top:400px;" width="19" height="16" viewBox="0 0 19 16"><path d="M1 1V12L4 9L6 14L8 13L6 8H10Z" fill="#d9d9d9"/><rect x="8.5" y="2.5" width="9" height="11" fill="none" stroke="#d9d9d9" stroke-dasharray="2 1"/><path d="M19 13V16H16Z" fill="#ddd"/></svg>
<svg class="a" style="left:12px;top:422px;" width="16" height="14" viewBox="0 0 16 14"><defs><linearGradient id="gt" x1="0" x2="1" y1="0" y2="1"><stop offset="0" stop-color="#333"/><stop offset="1" stop-color="#eee"/></linearGradient></defs><rect x="0.5" y="0.5" width="15" height="13" fill="url(#gt)" stroke="#ccc"/></svg>
<svg class="a" style="left:12px;top:444px;" width="16" height="13" viewBox="0 0 16 13"><defs><linearGradient id="gf" x1="0" x2="0" y1="0" y2="1"><stop offset="0" stop-color="#e0e0e0"/><stop offset="1" stop-color="#888"/></linearGradient></defs><rect x="0.5" y="0.5" width="15" height="12" fill="url(#gf)" stroke="#cfcfcf"/><rect x="3.8" y="1.0" width="2.8" height="2.8" fill="#4a4a4a" opacity="0.35"/><rect x="9.4" y="1.0" width="2.8" height="2.8" fill="#4a4a4a" opacity="0.35"/><rect x="1.0" y="3.8" width="2.8" height="2.8" fill="#4a4a4a" opacity="0.55"/><rect x="6.6" y="3.8" width="2.8" height="2.8" fill="#4a4a4a" opacity="0.55"/><rect x="12.2" y="3.8" width="2.8" height="2.8" fill="#4a4a4a" opacity="0.55"/><rect x="3.8" y="6.6" width="2.8" height="2.8" fill="#4a4a4a" opacity="0.75"/><rect x="9.4" y="6.6" width="2.8" height="2.8" fill="#4a4a4a" opacity="0.75"/><rect x="1.0" y="9.4" width="2.8" height="2.8" fill="#4a4a4a" opacity="0.95"/><rect x="6.6" y="9.4" width="2.8" height="2.8" fill="#4a4a4a" opacity="0.95"/><rect x="12.2" y="9.4" width="2.8" height="2.8" fill="#4a4a4a" opacity="0.95"/></svg>
<svg class="a" style="left:12px;top:470px;" width="16" height="15" viewBox="0 0 16 15"><path d="M0 0H16V10L12 15H0Z" fill="#d9d9d9"/><path d="M3 4H13M3 7H13M3 10H9" stroke="#555"/><path d="M12 15V10H16" fill="#888"/></svg>
<svg class="a" style="left:11px;top:492px;" width="18" height="17" viewBox="0 0 18 17"><path d="M2 15L10 7L12 9L4 17H2Z" fill="none" stroke="#d9d9d9" stroke-width="1.2"/><path d="M10 5L13 2A2 2 0 0 1 16 5L13 8" fill="#d9d9d9"/><path d="M18 14V17H15Z" fill="#ddd"/></svg>
<svg class="a" style="left:12px;top:512px;" width="16" height="18" viewBox="0 0 16 18"><path d="M3 9V4A1 1 0 0 1 5 4V8V2A1 1 0 0 1 7 2V8V1.5A1 1 0 0 1 9 1.5V8V3A1 1 0 0 1 11 3V10L13 7.5A1 1 0 0 1 15 9L11 16H5L2 11Z" fill="#d9d9d9"/></svg>
<svg class="a" style="left:12px;top:534px;" width="17" height="17" viewBox="0 0 17 17"><circle cx="6.5" cy="6.5" r="5" fill="#999" stroke="#d9d9d9" stroke-width="1.6"/><path d="M10 10L15.5 15.5" stroke="#d9d9d9" stroke-width="2.8"/></svg>
<svg class="a" style="left:9px;top:557px;" width="24" height="21" viewBox="0 0 24 21"><rect x="10.5" y="8.5" width="11" height="11" fill="#222" stroke="#ddd"/><rect x="13" y="11" width="6" height="6" fill="#333" stroke="#777"/><rect x="0.5" y="0.5" width="12" height="12" fill="#fff" stroke="#444"/><path d="M1 12L12 1" stroke="#b0102a" stroke-width="1.8"/><path d="M18 1Q22 1 22 5M20 4L22 6L23.5 4M18 0L16.5 1L18 2.5" stroke="#ccc" fill="none"/></svg>
<svg class="a" style="left:10px;top:580px;" width="11" height="11" viewBox="0 0 11 11"><rect x="3.5" y="3.5" width="7" height="7" fill="#222" stroke="#ddd"/><rect x="0.5" y="0.5" width="6" height="6" fill="#fff" stroke="#444"/><path d="M1 6L6 1" stroke="#b0102a" stroke-width="1.3"/></svg>
<svg class="a" style="left:10px;top:595px;" width="9" height="9" viewBox="0 0 9 9"><rect x="0.5" y="0.5" width="8" height="8" fill="none" stroke="#ddd"/></svg>
<div class="t" style="left:22px;top:594.79px;font-size:11px;line-height:11px;color:#ddd;font-weight:bold;font-family:'Liberation Serif',serif;">T</div>
<div class="a" style="left:8px;top:612px;width:24px;height:23px;background:#363636;border-radius:2px"></div>
<svg class="a" style="left:13px;top:615px;" width="15" height="16" viewBox="0 0 15 16"><rect x="0.5" y="0.5" width="12" height="12" fill="#fff" stroke="#444"/><path d="M1 12L12 1" stroke="#b0102a" stroke-width="1.8"/><path d="M15 13V16H12Z" fill="#ddd"/></svg>
<div class="a" style="left:8px;top:638px;width:24px;height:22px;background:#363636;border-radius:2px"></div>
<svg class="a" style="left:13px;top:642px;" width="16" height="15" viewBox="0 0 16 15"><rect x="0.5" y="0.5" width="12" height="11" fill="#555" stroke="#ddd"/><path d="M1 3H12" stroke="#ddd"/><path d="M15 12V15H12Z" fill="#ddd"/></svg>
<div class="a" style="left:1142px;top:117px;width:134px;height:96px;background:#494949;"></div>
<div class="a" style="left:1142px;top:213px;width:134px;height:1px;background:#333;"></div>
<div class="a" style="left:1142px;top:214px;width:134px;height:96px;background:#494949;"></div>
<div class="a" style="left:1142px;top:310px;width:134px;height:1px;background:#333;"></div>
<div class="a" style="left:1142px;top:311px;width:134px;height:40px;background:#494949;"></div>
<div class="a" style="left:1142px;top:351px;width:134px;height:1px;background:#333;"></div>
<div class="a" style="left:1142px;top:352px;width:134px;height:69px;background:#494949;"></div>
<div class="a" style="left:1142px;top:421px;width:134px;height:1px;background:#333;"></div>
<div class="a" style="left:1142px;top:422px;width:134px;height:67px;background:#494949;"></div>
<div class="a" style="left:1142px;top:489px;width:134px;height:1px;background:#333;"></div>
<div class="a" style="left:1142px;top:490px;width:134px;height:40px;background:#494949;"></div>
<div class="a" style="left:1142px;top:530px;width:134px;height:1px;background:#333;"></div>
<div class="a" style="left:1142px;top:531px;width:134px;height:184px;background:#494949;"></div>
<div class="a" style="left:1142px;top:715px;width:134px;height:1px;background:#333;"></div>
<svg class="a" style="left:1199px;top:120px;" width="19" height="4" viewBox="0 0 19 4"><rect x="0" y="0" width="1" height="4" fill="#111"/><rect x="2" y="0" width="1" height="4" fill="#111"/><rect x="4" y="0" width="1" height="4" fill="#111"/><rect x="6" y="0" width="1" height="4" fill="#111"/><rect x="8" y="0" width="1" height="4" fill="#111"/><rect x="10" y="0" width="1" height="4" fill="#111"/><rect x="12" y="0" width="1" height="4" fill="#111"/><rect x="14" y="0" width="1" height="4" fill="#111"/><rect x="16" y="0" width="1" height="4" fill="#111"/><rect x="18" y="0" width="1" height="4" fill="#111"/></svg>
<svg class="a" style="left:1199px;top:217px;" width="19" height="4" viewBox="0 0 19 4"><rect x="0" y="0" width="1" height="4" fill="#111"/><rect x="2" y="0" width="1" height="4" fill="#111"/><rect x="4" y="0" width="1" height="4" fill="#111"/><rect x="6" y="0" width="1" height="4" fill="#111"/><rect x="8" y="0" width="1" height="4" fill="#111"/><rect x="10" y="0" width="1" height="4" fill="#111"/><rect x="12" y="0" width="1" height="4" fill="#111"/><rect x="14" y="0" width="1" height="4" fill="#111"/><rect x="16" y="0" width="1" height="4" fill="#111"/><rect x="18" y="0" width="1" height="4" fill="#111"/></svg>
<svg class="a" style="left:1199px;top:314px;" width="19" height="4" viewBox="0 0 19 4"><rect x="0" y="0" width="1" height="4" fill="#111"/><rect x="2" y="0" width="1" height="4" fill="#111"/><rect x="4" y="0" width="1" height="4" fill="#111"/><rect x="6" y="0" width="1" height="4" fill="#111"/><rect x="8" y="0" width="1" height="4" fill="#111"/><rect x="10" y="0" width="1" height="4" fill="#111"/><rect x="12" y="0" width="1" height="4" fill="#111"/><rect x="14" y="0" width="1" height="4" fill="#111"/><rect x="16" y="0" width="1" height="4" fill="#111"/><rect x="18" y="0" width="1" height="4" fill="#111"/></svg>
<svg class="a" style="left:1199px;top:355px;" width="19" height="4" viewBox="0 0 19 4"><rect x="0" y="0" width="1" height="4" fill="#111"/><rect x="2" y="0" width="1" height="4" fill="#111"/><rect x="4" y="0" width="1" height="4" fill="#111"/><rect x="6" y="0" width="1" height="4" fill="#111"/><rect x="8" y="0" width="1" height="4" fill="#111"/><rect x="10" y="0" width="1" height="4" fill="#111"/><rect x="12" y="0" width="1" height="4" fill="#111"/><rect x="14" y="0" width="1" height="4" fill="#111"/><rect x="16" y="0" width="1" height="4" fill="#111"/><rect x="18" y="0" width="1" height="4" fill="#111"/></svg>
<svg class="a" style="left:1199px;top:425px;" width="19" height="4" viewBox="0 0 19 4"><rect x="0" y="0" width="1" height="4" fill="#111"/><rect x="2" y="0" width="1" height="4" fill="#111"/><rect x="4" y="0" width="1" height="4" fill="#111"/><rect x="6" y="0" width="1" height="4" fill="#111"/><rect x="8" y="0" width="1" height="4" fill="#111"/><rect x="10" y="0" width="1" height="4" fill="#111"/><rect x="12" y="0" width="1" height="4" fill="#111"/><rect x="14" y="0" width="1" height="4" fill="#111"/><rect x="16" y="0" width="1" height="4" fill="#111"/><rect x="18" y="0" width="1" height="4" fill="#111"/></svg>
<svg class="a" style="left:1199px;top:493px;" width="19" height="4" viewBox="0 0 19 4"><rect x="0" y="0" width="1" height="4" fill="#111"/><rect x="2" y="0" width="1" height="4" fill="#111"/><rect x="4" y="0" width="1" height="4" fill="#111"/><rect x="6" y="0" width="1" height="4" fill="#111"/><rect x="8" y="0" width="1" height="4" fill="#111"/><rect x="10" y="0" width="1" height="4" fill="#111"/><rect x="12" y="0" width="1" height="4" fill="#111"/><rect x="14" y="0" width="1" height="4" fill="#111"/><rect x="16" y="0" width="1" height="4" fill="#111"/><rect x="18" y="0" width="1" height="4" fill="#111"/></svg>
<div class="t" id="f87" style="left:1179.3px;top:135.69px;font-size:11px;line-height:11px;color:#dedede;font-weight:bold;font-family:'Liberation Sans',sans-serif;transform:scaleX(0.8663);transform-origin:0 0;">Seiten</div>
<div class="t" id="f88" style="left:1179.3px;top:163.69px;font-size:11px;line-height:11px;color:#dedede;font-weight:bold;font-family:'Liberation Sans',sans-serif;transform:scaleX(0.9093);transform-origin:0 0;">Verknüpfungen</div>
<div class="t" id="f89" style="left:1179.3px;top:191.69px;font-size:11px;line-height:11px;color:#dedede;font-weight:bold;font-family:'Liberation Sans',sans-serif;transform:scaleX(0.8129);transform-origin:0 0;">Ebenen</div>
<div class="t" id="f90" style="left:1179.3px;top:231.69px;font-size:11px;line-height:11px;color:#dedede;font-weight:bold;font-family:'Liberation Sans',sans-serif;transform:scaleX(0.8933);transform-origin:0 0;">Kontur</div>
<div class="t" id="f91" style="left:1179.3px;top:259.69px;font-size:11px;line-height:11px;color:#dedede;font-weight:bold;font-family:'Liberation Sans',sans-serif;transform:scaleX(0.8606);transform-origin:0 0;">Farbfelder</div>
<div class="t" id="f92" style="left:1179.3px;top:287.69px;font-size:11px;line-height:11px;color:#dedede;font-weight:bold;font-family:'Liberation Sans',sans-serif;transform:scaleX(0.9077);transform-origin:0 0;">Verlauf</div>
<div class="t" id="f93" style="left:1179.3px;top:329.19px;font-size:11px;line-height:11px;color:#dedede;font-weight:bold;font-family:'Liberation Sans',sans-serif;transform:scaleX(0.9185);transform-origin:0 0;">Objektformate</div>
<div class="t" id="f94" style="left:1179.3px;top:370.19px;font-size:11px;line-height:11px;color:#dedede;font-weight:bold;font-family:'Liberation Sans',sans-serif;transform:scaleX(0.8874);transform-origin:0 0;">Absatzformate</div>
<div class="t" id="f95" style="left:1179.3px;top:398.19px;font-size:11px;line-height:11px;color:#dedede;font-weight:bold;font-family:'Liberation Sans',sans-serif;transform:scaleX(0.8850);transform-origin:0 0;">Zeichenformate</div>
<div class="t" id="f96" style="left:1179.3px;top:439.19px;font-size:11px;line-height:11px;color:#dedede;font-weight:bold;font-family:'Liberation Sans',sans-serif;transform:scaleX(0.9007);transform-origin:0 0;">Tabellenformate</div>
<div class="t" id="f97" style="left:1179.3px;top:466.69px;font-size:11px;line-height:11px;color:#dedede;font-weight:bold;font-family:'Liberation Sans',sans-serif;transform:scaleX(0.8996);transform-origin:0 0;">Zellenformate</div>
<div class="t" id="f98" style="left:1179.3px;top:508.19px;font-size:11px;line-height:11px;color:#dedede;font-weight:bold;font-family:'Liberation Sans',sans-serif;transform:scaleX(0.8896);transform-origin:0 0;">Bibliothek</div>
<svg class="a" style="left:1153px;top:134px;" width="18" height="15" viewBox="0 0 18 15"><path d="M0 3L3 0H8V14H0Z" fill="#d0d0d0"/><path d="M10 0H15L18 3V14H10Z" fill="#d0d0d0"/><path d="M9 -2V16" stroke="#eee"/></svg>
<svg class="a" style="left:1153px;top:162px;" width="18" height="15" viewBox="0 0 18 15"><rect x="1" y="2.5" width="16" height="10" rx="4.5" fill="none" stroke="#d0d0d0" stroke-width="2.2"/><path d="M5 7.5H13" stroke="#d0d0d0" stroke-width="2.2"/><path d="M9 0V5M9 10V15" stroke="#494949" stroke-width="2"/></svg>
<svg class="a" style="left:1153px;top:190px;" width="18" height="15" viewBox="0 0 18 15"><path d="M9 0L17 5L9 10L1 5Z" fill="#d0d0d0"/><path d="M2 8.5L9 13L16 8.5" stroke="#d0d0d0" stroke-width="2" fill="none"/></svg>
<svg class="a" style="left:1153px;top:230px;" width="18" height="15" viewBox="0 0 18 15"><rect x="0" y="1" width="18" height="1.5" fill="#d0d0d0"/><rect x="0" y="6" width="18" height="2.5" fill="#d0d0d0"/><rect x="0" y="11" width="18" height="3.5" fill="#d0d0d0"/></svg>
<svg class="a" style="left:1153px;top:258px;" width="18" height="15" viewBox="0 0 18 15"><rect x="0.5" y="0.5" width="16" height="11" fill="#333" stroke="#d0d0d0"/><path d="M0.5 6H16.5M6 0.5V11.5M11 0.5V11.5" stroke="#d0d0d0"/><rect x="1" y="1" width="5" height="5" fill="#111"/><rect x="6.5" y="1" width="4.5" height="5" fill="#555"/><rect x="11.5" y="1" width="4.5" height="5" fill="#888"/><rect x="1" y="6.5" width="5" height="4.5" fill="#777"/><rect x="6.5" y="6.5" width="4.5" height="4.5" fill="#666"/><rect x="11.5" y="6.5" width="4.5" height="4.5" fill="#444"/></svg>
<svg class="a" style="left:1153px;top:286px;" width="18" height="15" viewBox="0 0 18 15"><defs><linearGradient id="gv"><stop offset="0" stop-color="#eee"/><stop offset="1" stop-color="#888"/></linearGradient></defs><rect x="0" y="0" width="17" height="14" fill="url(#gv)"/></svg>
<svg class="a" style="left:1153px;top:327.5px;" width="18" height="15" viewBox="0 0 18 15"><rect x="0.5" y="6.5" width="6" height="6" fill="none" stroke="#d0d0d0"/><rect x="3.5" y="9.5" width="6" height="5" fill="#494949" stroke="#d0d0d0"/><path d="M7 0H17V12H9V5H7Z" fill="#d0d0d0" opacity="0.6"/></svg>
<svg class="a" style="left:1153px;top:368.5px;" width="18" height="15" viewBox="0 0 18 15"><rect x="0.5" y="6.5" width="6" height="6" fill="none" stroke="#d0d0d0"/><rect x="3.5" y="9.5" width="6" height="5" fill="#494949" stroke="#d0d0d0"/><path d="M13 0V12M16 0V12M16 0.5H12A3.5 3.5 0 0 0 12 7.5H13" stroke="#d0d0d0" stroke-width="1.6" fill="#d0d0d0"/></svg>
<svg class="a" style="left:1153px;top:396.5px;" width="18" height="15" viewBox="0 0 18 15"><rect x="0.5" y="6.5" width="6" height="6" fill="none" stroke="#d0d0d0"/><rect x="3.5" y="9.5" width="6" height="5" fill="#494949" stroke="#d0d0d0"/><path d="M8 12L12.5 0L17 12M10 8H15" stroke="#d0d0d0" stroke-width="1.6" fill="none"/></svg>
<svg class="a" style="left:1153px;top:437.5px;" width="18" height="15" viewBox="0 0 18 15"><rect x="0.5" y="6.5" width="6" height="6" fill="none" stroke="#d0d0d0"/><rect x="3.5" y="9.5" width="6" height="5" fill="#494949" stroke="#d0d0d0"/><rect x="5.5" y="0.5" width="12" height="11" fill="none" stroke="#d0d0d0"/><path d="M5.5 4H17.5M5.5 7.5H17.5M10 0.5V11.5" stroke="#d0d0d0"/></svg>
<svg class="a" style="left:1153px;top:465px;" width="18" height="15" viewBox="0 0 18 15"><rect x="0.5" y="6.5" width="6" height="6" fill="none" stroke="#d0d0d0"/><rect x="3.5" y="9.5" width="6" height="5" fill="#494949" stroke="#d0d0d0"/><rect x="5.5" y="0.5" width="12" height="11" fill="none" stroke="#d0d0d0"/><path d="M5.5 4H17.5" stroke="#d0d0d0"/><rect x="10" y="4" width="7" height="7" fill="#d0d0d0" opacity="0.7"/></svg>
<svg class="a" style="left:1153px;top:506.5px;" width="18" height="15" viewBox="0 0 18 15"><path d="M0 1H3V14H0ZM4 2H7V14H4Z" fill="#d0d0d0"/><path d="M8 2.5L10.5 1.5L15 13.5L12.5 14.5Z" fill="#d0d0d0"/></svg>
<svg class="a" style="left:55px;top:703px;" width="19" height="10.5" viewBox="0 0 19 10.5"><rect x="0" y="0" width="19" height="10.5" rx="2" fill="#a8a8a8"/><rect x="5" y="0.8" width="2" height="2.5" fill="#1a1a1a" transform="rotate(0 6 5)"/><rect x="5" y="0.8" width="2" height="2.5" fill="#1a1a1a" transform="rotate(45 6 5)"/><rect x="5" y="0.8" width="2" height="2.5" fill="#1a1a1a" transform="rotate(90 6 5)"/><rect x="5" y="0.8" width="2" height="2.5" fill="#1a1a1a" transform="rotate(135 6 5)"/><rect x="5" y="0.8" width="2" height="2.5" fill="#1a1a1a" transform="rotate(180 6 5)"/><rect x="5" y="0.8" width="2" height="2.5" fill="#1a1a1a" transform="rotate(225 6 5)"/><rect x="5" y="0.8" width="2" height="2.5" fill="#1a1a1a" transform="rotate(270 6 5)"/><rect x="5" y="0.8" width="2" height="2.5" fill="#1a1a1a" transform="rotate(315 6 5)"/><circle cx="6" cy="5" r="2.9" fill="#1a1a1a"/><circle cx="6" cy="5" r="1.1" fill="#a8a8a8"/><path d="M10 2.5L13 5.2M13.5 5.5L16.5 8.5" stroke="#1a1a1a" stroke-width="1.3"/><path d="M9.5 1.5H12.5L9.5 4.5Z M17.5 9.5H14.5L17.5 6.5Z" fill="#1a1a1a"/></svg>
<svg class="a" style="left:82px;top:702px;" width="14" height="12" viewBox="0 0 14 12"><path d="M1 3.5V10.5H10.5V8" stroke="#d0d0d0" stroke-width="1.4" fill="none"/><path d="M1 3.5H5" stroke="#d0d0d0" stroke-width="1.4"/><path d="M4 9Q4.5 4.5 9.5 4V1.5L13.5 5L9.5 8.5V6Q6 6.5 4 9Z" fill="#d0d0d0"/></svg>
<svg class="a" style="left:105px;top:704.5px;" width="8" height="10" viewBox="0 0 8 10"><path d="M0.5 0V10" stroke="#ccc"/><path d="M8 0L2 5L8 10Z" fill="#ccc"/></svg>
<svg class="a" style="left:120px;top:704.5px;" width="6" height="10" viewBox="0 0 6 10"><path d="M6 0L0 5L6 10Z" fill="#ccc"/></svg>
<div class="t" id="f99" style="left:134.8px;top:702.69px;font-size:11px;line-height:11px;color:#e4e4ee;font-weight:normal;font-family:'Liberation Sans',sans-serif;transform:scaleX(0.8163);transform-origin:0 0;">47</div>
<svg class="a" style="left:217px;top:705px;" width="8" height="6" viewBox="0 0 8 6"><path d="M0 0H8L4 6Z" fill="#ddd"/></svg>
<svg class="a" style="left:235px;top:703px;" width="6" height="10" viewBox="0 0 6 10"><path d="M0 0L6 5L0 10Z" fill="#ccc"/></svg>
<svg class="a" style="left:248px;top:703px;" width="8" height="10" viewBox="0 0 8 10"><path d="M0 0L6 5L0 10Z" fill="#ccc"/><path d="M7.5 0V10" stroke="#ccc"/></svg>
<svg class="a" style="left:264px;top:701px;" width="16" height="14" viewBox="0 0 16 14"><circle cx="6.5" cy="6.5" r="6.3" fill="#d6d6d6"/><path d="M3.5 2.5H7.5L10 5V10.5H3.5Z" fill="#333"/><path d="M4.5 3.5H7L9 5.5V9.5H4.5Z" fill="#e6e6e6"/><path d="M13 12H16L14.5 13.5Z" fill="#ddd"/></svg>
<div class="t" id="f100" style="left:290px;top:702.69px;font-size:11px;line-height:11px;color:#7c7c7c;font-weight:normal;font-family:'Liberation Sans',sans-serif;transform:scaleX(0.8224);transform-origin:0 0;">[Grundprofil] (Arbeits...</div>
<svg class="a" style="left:398px;top:706px;" width="7" height="5" viewBox="0 0 7 5"><path d="M0 0H7L3.5 5Z" fill="#777"/></svg>
<svg class="a" style="left:409px;top:702px;" width="11" height="11" viewBox="0 0 11 11"><circle cx="5.5" cy="5.5" r="5.5" fill="#6a6a6a"/></svg>
<div class="t" id="f101" style="left:424px;top:702.69px;font-size:11px;line-height:11px;color:#dcdcdc;font-weight:normal;font-family:'Liberation Sans',sans-serif;transform:scaleX(0.8176);transform-origin:0 0;">Preflight aus</div>
<svg class="a" style="left:496px;top:706px;" width="6" height="4" viewBox="0 0 6 4"><path d="M0 0H6L3 4Z" fill="#ddd"/></svg>
<div class="a" style="left:505px;top:700px;width:619px;height:15px;background:#353535;"></div>
<div class="a" style="left:505px;top:700px;width:1px;height:15px;background:#262626;"></div>
<svg class="a" style="left:510.6px;top:703.5px;" width="6" height="9" viewBox="0 0 6 9"><path d="M6 0L0 4.5L6 9Z" fill="#ddd"/></svg>
<div class="a" style="left:663px;top:701px;width:392px;height:13px;background:#8c8c8c;"></div>
<svg class="a" style="left:1090px;top:703px;" width="6" height="9" viewBox="0 0 6 9"><path d="M0 0L6 4.5L0 9Z" fill="#ddd"/></svg>
<div class="a" style="left:1101px;top:700px;width:23px;height:15px;background:#3a3a3a;"></div>
<svg class="a" style="left:1105px;top:702px;" width="16" height="11" viewBox="0 0 16 11"><rect x="0.5" y="0.5" width="15" height="10" fill="none" stroke="#ddd" stroke-width="1.3"/><path d="M8 0V11" stroke="#ddd" stroke-width="1.3"/></svg>
<div class="a" style="left:1124px;top:700px;width:15px;height:15px;background:#3a3a3a;"></div>
<svg class="a" style="left:1127px;top:703px;" width="10" height="10" viewBox="0 0 10 10"><rect x="9" y="9" width="1" height="1" fill="#999"/><rect x="7" y="9" width="1" height="1" fill="#999"/><rect x="9" y="7" width="1" height="1" fill="#999"/><rect x="5" y="9" width="1" height="1" fill="#999"/><rect x="7" y="7" width="1" height="1" fill="#999"/><rect x="9" y="5" width="1" height="1" fill="#999"/><rect x="3" y="9" width="1" height="1" fill="#999"/><rect x="5" y="7" width="1" height="1" fill="#999"/><rect x="7" y="5" width="1" height="1" fill="#999"/><rect x="9" y="3" width="1" height="1" fill="#999"/><rect x="1" y="9" width="1" height="1" fill="#999"/><rect x="3" y="7" width="1" height="1" fill="#999"/><rect x="5" y="5" width="1" height="1" fill="#999"/><rect x="7" y="3" width="1" height="1" fill="#999"/><rect x="9" y="1" width="1" height="1" fill="#999"/></svg>
<svg class="a" style="left:1127px;top:130px;" width="9" height="7" viewBox="0 0 9 7"><path d="M0 7L4.5 0L9 7Z" fill="#ddd"/></svg>
<svg class="a" style="left:1127px;top:690px;" width="9" height="7" viewBox="0 0 9 7"><path d="M0 0L4.5 7L9 0Z" fill="#ddd"/></svg>
<div class="a" style="left:880px;top:170px;width:209px;height:416px;background:rgba(0,0,0,0.12);filter:blur(1px)"></div>
<div class="a" style="left:879px;top:169px;width:209px;height:416px;background:#494949;border:1px solid #262626;border-radius:4px 4px 0 0"></div>
<div class="a" style="left:880px;top:170px;width:207px;height:13px;background:#2e2e2e;border-radius:3px 3px 0 0"></div>
<svg class="a" style="left:1059px;top:173px;" width="8" height="7" viewBox="0 0 8 7"><path d="M4 0L0 3.5L4 7ZM8 0L4 3.5L8 7Z" fill="#ccc"/></svg>
<svg class="a" style="left:1076px;top:173px;" width="7" height="7" viewBox="0 0 7 7"><path d="M0.5 0.5L6.5 6.5M6.5 0.5L0.5 6.5" stroke="#ddd" stroke-width="1.5"/></svg>
<div class="a" style="left:880px;top:183px;width:207px;height:18px;background:#363636;"></div>
<div class="a" style="left:880px;top:183px;width:55px;height:18px;background:#454545;"></div>
<svg class="a" style="left:884px;top:187px;" width="5" height="10" viewBox="0 0 5 10"><path d="M0.5 4L2.5 1L4.5 4M0.5 6L2.5 9L4.5 6" stroke="#ddd" fill="none"/></svg>
<div class="t" id="f102" style="left:893px;top:186.69px;font-size:11px;line-height:11px;color:#e0e0e0;font-weight:bold;font-family:'Liberation Sans',sans-serif;transform:scaleX(0.9304);transform-origin:0 0;">Skripte</div>
<svg class="a" style="left:1068px;top:187px;" width="16" height="8" viewBox="0 0 16 8"><path d="M0 3H4L2 5.5Z" fill="#ccc"/><path d="M5 0.5H15M5 3H15M5 5.5H15M5 8H15" stroke="#ddd"/></svg>
<div class="a" style="left:880px;top:201px;width:207px;height:1px;background:#2a2a2a;"></div>
<div class="a" style="left:880px;top:202px;width:207px;height:1px;background:#5a5a5a;"></div>
<div class="a" style="left:880px;top:203px;width:194px;height:358px;background:#4a4a4a;"></div>
<div class="a" style="left:880px;top:222px;width:194px;height:1px;background:#353535;"></div>
<div class="a" style="left:880px;top:242px;width:194px;height:1px;background:#353535;"></div>
<div class="a" style="left:880px;top:262px;width:194px;height:1px;background:#353535;"></div>
<div class="a" style="left:880px;top:282px;width:194px;height:1px;background:#353535;"></div>
<div class="a" style="left:880px;top:263px;width:194px;height:19px;background:#4f5667;"></div>
<div class="a" style="left:1074px;top:203px;width:13px;height:358px;background:#3c3c3c;"></div>
<svg class="a" style="left:1077px;top:207px;" width="8" height="5" viewBox="0 0 8 5"><path d="M0 5L4 0L8 5Z" fill="#666"/></svg>
<svg class="a" style="left:1077px;top:552px;" width="8" height="5" viewBox="0 0 8 5"><path d="M0 0L4 5L8 0Z" fill="#888"/></svg>
<svg class="a" style="left:883px;top:210px;" width="9" height="5" viewBox="0 0 9 5"><path d="M0 0H9L4.5 5Z" fill="#ccc"/></svg>
<svg class="a" style="left:897px;top:206px;" width="14" height="11" viewBox="0 0 14 11"><path d="M0 2H5L6 0.5H0Z" fill="#ccc"/><path d="M0 2.5H6L7 1.5H14V11H0Z" fill="#c8c8c8"/></svg>
<div class="t" id="f103" style="left:915px;top:207.11px;font-size:10.5px;line-height:10.5px;color:#d2d2d2;font-weight:normal;font-family:'Liberation Sans',sans-serif;transform:scaleX(0.8473);transform-origin:0 0;">Anwendung</div>
<svg class="a" style="left:911px;top:225px;" width="17" height="15" viewBox="0 0 17 15"><path d="M9 1.5C5 0 1 1.5 2 4.5C3 7 8 6.5 7 10C6.2 12.5 2.5 13 1 12" fill="none" stroke="#cfcfcf" stroke-width="2.6" stroke-linecap="round"/><circle cx="12.5" cy="10" r="4.2" fill="#cfcfcf"/><path d="M11 13L14 7" stroke="#4a4a4a" stroke-width="1.2"/></svg>
<div class="t" id="f104" style="left:931px;top:227.11px;font-size:10.5px;line-height:10.5px;color:#d2d2d2;font-weight:normal;font-family:'Liberation Sans',sans-serif;transform:scaleX(0.8444);transform-origin:0 0;">Indic Preferences</div>
<svg class="a" style="left:886px;top:248px;" width="6" height="9" viewBox="0 0 6 9"><path d="M0 0L5.5 4.5L0 9Z" fill="#ccc"/></svg>
<svg class="a" style="left:913px;top:246px;" width="14" height="11" viewBox="0 0 14 11"><path d="M0 2H5L6 0.5H0Z" fill="#ccc"/><path d="M0 2.5H6L7 1.5H14V11H0Z" fill="#c8c8c8"/></svg>
<div class="t" id="f105" style="left:931px;top:247.11px;font-size:10.5px;line-height:10.5px;color:#d2d2d2;font-weight:normal;font-family:'Liberation Sans',sans-serif;transform:scaleX(0.8321);transform-origin:0 0;">Samples</div>
<svg class="a" style="left:883px;top:270px;" width="9" height="5" viewBox="0 0 9 5"><path d="M0 0H9L4.5 5Z" fill="#ccc"/></svg>
<svg class="a" style="left:897px;top:266px;" width="14" height="11" viewBox="0 0 14 11"><path d="M0 2H5L6 0.5H0Z" fill="#ccc"/><path d="M0 2.5H6L7 1.5H14V11H0Z" fill="#c8c8c8"/></svg>
<div class="t" id="f106" style="left:915px;top:267.11px;font-size:10.5px;line-height:10.5px;color:#e4e4e4;font-weight:normal;font-family:'Liberation Sans',sans-serif;transform:scaleX(0.9517);transform-origin:0 0;">Benutzer</div>
<div class="a" style="left:880px;top:561px;width:194px;height:1px;background:#2a2a2a;"></div>
<div class="a" style="left:880px;top:562px;width:207px;height:14px;background:#4a4a4a;"></div>
<svg class="a" style="left:1077px;top:566px;" width="8" height="8" viewBox="0 0 8 8"><rect x="7" y="7" width="1" height="1" fill="#111"/><rect x="5" y="7" width="1" height="1" fill="#111"/><rect x="7" y="5" width="1" height="1" fill="#111"/><rect x="3" y="7" width="1" height="1" fill="#111"/><rect x="5" y="5" width="1" height="1" fill="#111"/><rect x="7" y="3" width="1" height="1" fill="#111"/><rect x="1" y="7" width="1" height="1" fill="#111"/><rect x="3" y="5" width="1" height="1" fill="#111"/><rect x="5" y="3" width="1" height="1" fill="#111"/><rect x="7" y="1" width="1" height="1" fill="#111"/></svg>
<div class="a" style="left:880px;top:576px;width:207px;height:1px;background:#2a2a2a;"></div>
<div class="a" style="left:880px;top:577px;width:207px;height:7px;background:#4b4b4b;"></div>
<svg class="a" style="left:974px;top:579px;" width="19" height="4" viewBox="0 0 19 4"><rect x="0" y="0" width="1" height="4" fill="#111"/><rect x="2" y="0" width="1" height="4" fill="#111"/><rect x="4" y="0" width="1" height="4" fill="#111"/><rect x="6" y="0" width="1" height="4" fill="#111"/><rect x="8" y="0" width="1" height="4" fill="#111"/><rect x="10" y="0" width="1" height="4" fill="#111"/><rect x="12" y="0" width="1" height="4" fill="#111"/><rect x="14" y="0" width="1" height="4" fill="#111"/><rect x="16" y="0" width="1" height="4" fill="#111"/><rect x="18" y="0" width="1" height="4" fill="#111"/></svg>
<div class="a" style="left:930px;top:275px;width:233px;height:29px;background:rgba(0,0,0,0.3);filter:blur(2px)"></div>
<div class="a" style="left:928px;top:273px;width:233px;height:29px;background:#fbfbfc;border:1px solid #bdbdbd"></div>
<div class="a" style="left:931px;top:276px;width:227px;height:23px;background:#eef0f8;border:1px solid #cfd6e6;border-radius:2px"></div>
<div class="a" style="left:958px;top:277px;width:1px;height:21px;background:#fafafa;"></div>
<div class="t" id="f107" style="left:963.9px;top:280.10px;font-size:15px;line-height:15px;color:#151515;font-weight:normal;font-family:'Liberation Sans',sans-serif;transform:scaleX(0.9877);transform-origin:0 0;">Im Explorer anzeigen</div>
<svg class="a" style="left:986px;top:290px;" width="13" height="19" viewBox="0 0 13 19"><path d="M1 1V16L4.6 12.6L7.4 18.2L9.6 17.2L6.9 11.6H11.8Z" fill="#fff" stroke="#000" stroke-width="1" stroke-linejoin="round"/></svg>
<div class="t" id="f108" style="left:64.5px;top:692.27px;font-size:11.5px;line-height:11.5px;color:rgba(255,255,255,0.45);font-weight:bold;font-family:'Liberation Sans',sans-serif;transform:scaleX(1.1164);transform-origin:0 0;">PSD-Tutorials.de</div>
<svg class="a" style="left:25px;top:660px;" width="50" height="45" viewBox="0 0 50 45"><g fill="none" stroke-linecap="round"><path d="M12 9.5C7 8.5 4 13 7 22C9.5 29 12 34 15 33.5" stroke="rgba(215,215,215,0.75)" stroke-width="2.6"/><path d="M12.5 9.5C18 10.5 22 16 25 22" stroke="rgba(200,200,200,0.6)" stroke-width="2.6"/><path d="M10.5 37C8 40 13 41.5 19 38.5" stroke="rgba(215,215,215,0.7)" stroke-width="2.2"/><ellipse cx="31.5" cy="29.5" rx="15" ry="5.2" transform="rotate(-52 31.5 29.5)" stroke="rgba(225,225,225,0.75)" stroke-width="2.8"/></g></svg>
</body></html>
